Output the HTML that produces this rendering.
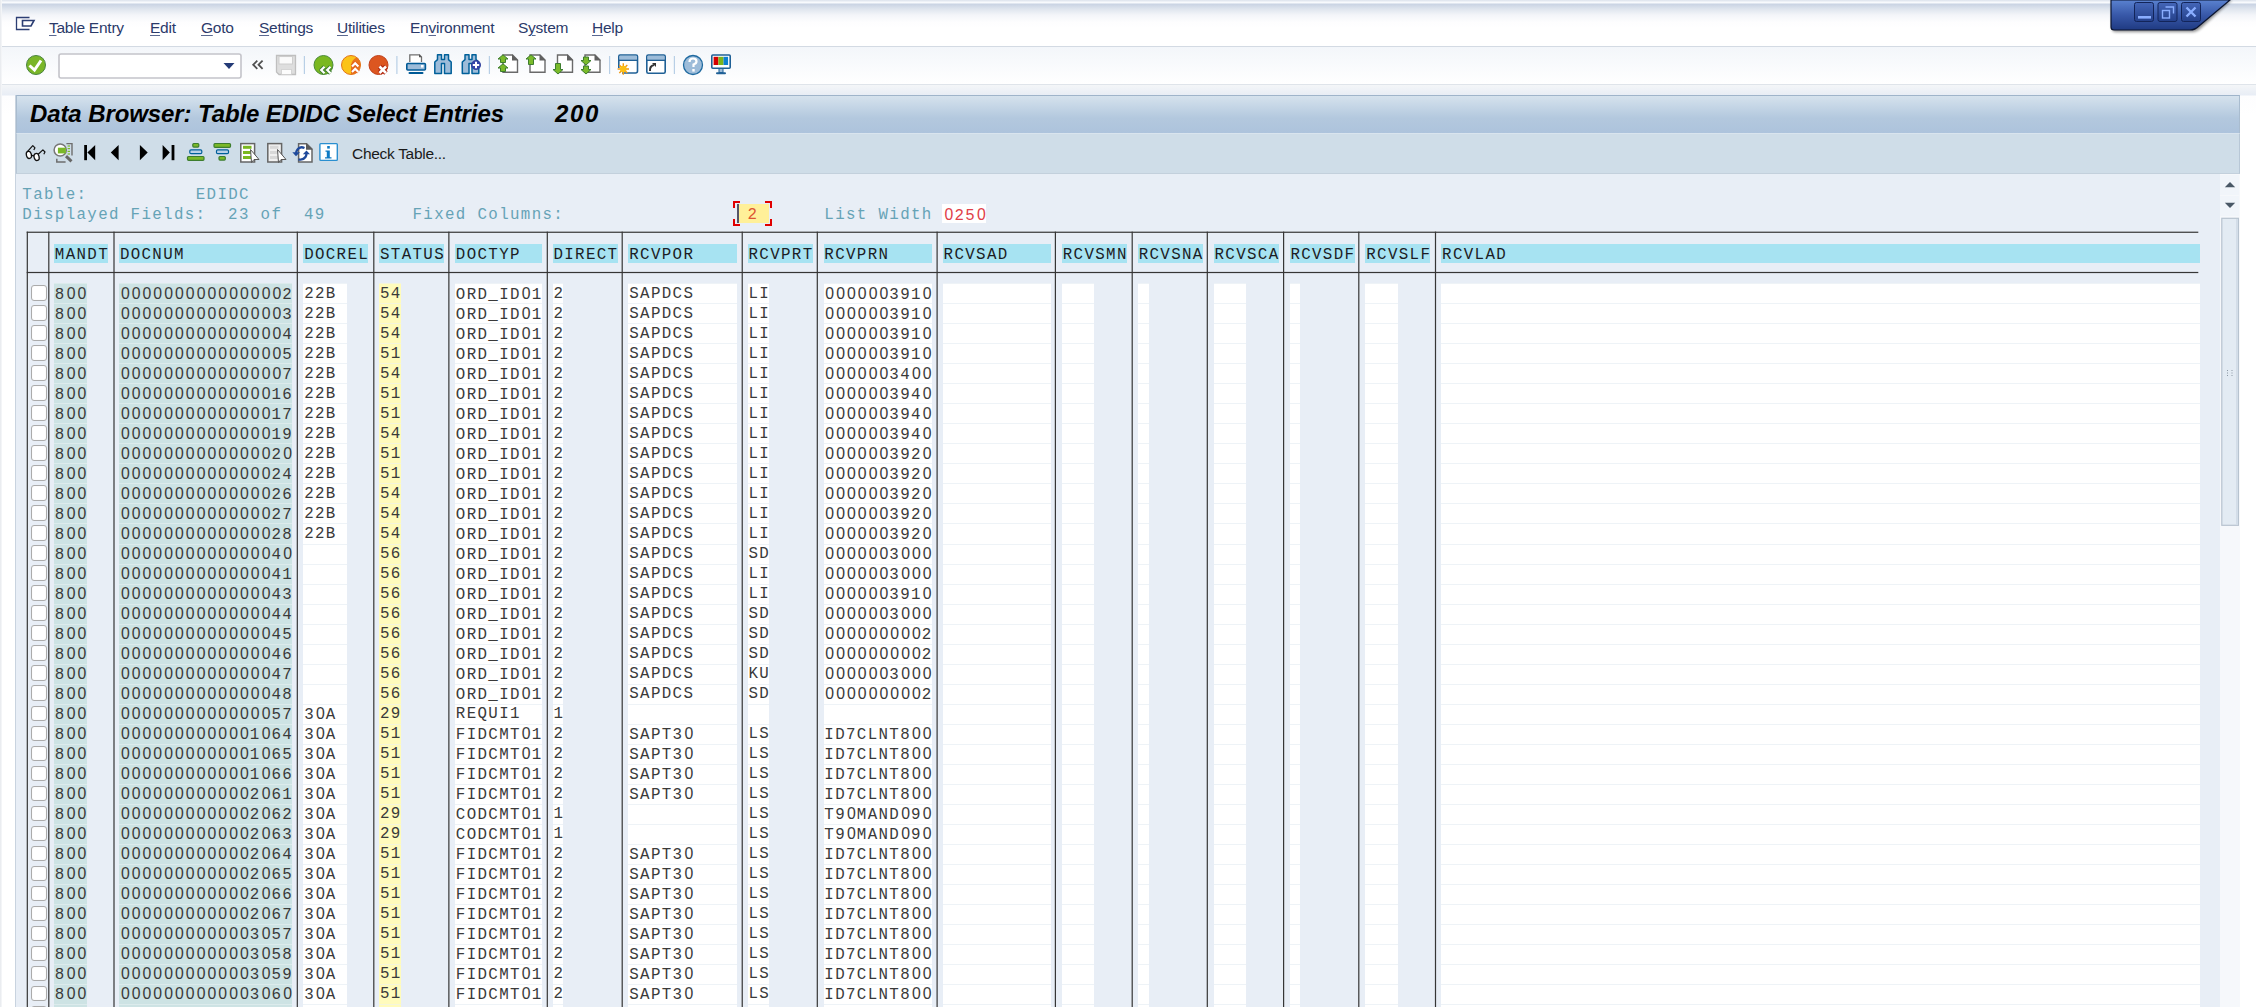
<!DOCTYPE html>
<html><head><meta charset="utf-8">
<style>
html,body{margin:0;padding:0;width:2256px;height:1007px;overflow:hidden;background:#fff;position:relative;font-family:"Liberation Sans",sans-serif}
div{position:absolute;box-sizing:border-box}
.topgrad{left:0;top:0;width:2256px;height:46px;background:linear-gradient(#dfe5ee 0px,#e4e9f1 1px,#f8fafd 2px,#f8fafd 3px,#c9d3e3 4px,#dfe5ee 9px,#f3f5f9 15px,#fdfdfe 22px,#ffffff 28px)}
.menusep{left:0;top:46px;width:2256px;height:1px;background:#d3dae3}
.tbarea{left:0;top:47px;width:2256px;height:37px;background:linear-gradient(#f3f6fa,#ffffff)}
.tbsep{left:0;top:84px;width:2256px;height:1px;background:#dfe4ea}
.below{left:0;top:85px;width:2256px;height:922px;background:linear-gradient(#f4f6f8,#e8edf5 10px,#fdfdfe 11px,#ffffff 30px)}
.panel{left:15px;top:95px;width:2225px;height:912px;background:#e8eef6;border-left:1px solid #c8d3df;border-right:1px solid #c8d3df}
.titleband{left:16px;top:95px;width:2224px;height:38px;background:linear-gradient(#d5e2ed,#b3c8de 60%,#adc3dc);border-top:1px solid #9fb4ca;border-left:1px solid #a9bccf;border-right:1px solid #a9bccf}
.apptb{left:16px;top:133px;width:2224px;height:41px;background:#cfdde8;border-top:1px solid #d9e4ee;border-bottom:1px solid #c3d0dc;border-left:1px solid #b8c7d6;border-right:1px solid #b8c7d6}
.menu{top:18px;font-size:15.5px;letter-spacing:-0.25px;color:#2b3a6a;white-space:nowrap;line-height:20px}
.menu u{text-decoration:underline;text-decoration-thickness:1px;text-underline-offset:1.5px;text-decoration-color:#5a6890}
.title{left:30px;top:100px;font-size:24px;font-weight:bold;font-style:italic;color:#000;white-space:nowrap;line-height:28px}
.chk{left:352px;top:144px;font-size:15.5px;letter-spacing:-0.3px;color:#1a1a1a;white-space:nowrap;line-height:20px}
.t{font-family:"Liberation Mono",monospace;font-size:15.8px;letter-spacing:1.35px;line-height:20px;height:20px;white-space:pre;color:#3a3a3a}
.h{color:#1c1c24}
.t b,.lbl b{font-weight:normal;display:inline-block;width:10.838px;letter-spacing:0;font-family:"Liberation Sans",sans-serif;font-size:15.8px;text-indent:1px}
.lbl{font-family:"Liberation Mono",monospace;font-size:15.8px;letter-spacing:1.35px;line-height:20px;white-space:pre;color:#66a3b6}
.red{color:#e04048}
.red2{color:#dd5533}
.bgw{background:#fff}
.fc{background:#fff099}
.cur{width:1.5px;height:19px;background:#556}
.brk{width:7px;height:7px}
.hl{height:1px;background:#2a2a2a;box-shadow:0 1px 0 rgba(0,0,0,0.15)}
.vl{width:1px;background:#303030;box-shadow:1px 0 0 rgba(0,0,0,0.28)}
.hbg{height:19px;background:#a7e3f2}
.bk{height:21px;background:#cde3e4;border-top:1px solid #dcebec}
.by{height:21px;background:#fffbbc;border-top:1px solid #f4f5dc}
.bn{height:21px;background:#fff;border-top:1px solid #eef3f7}
.cb{width:15.6px;height:15.8px;border:1.3px solid #ababab;border-radius:3px;background:#fff;box-shadow:inset 0 0 1px rgba(0,0,0,0.12)}
</style></head><body>
<div class="topgrad"></div>
<div class="menusep"></div>
<div class="tbarea"></div>
<div class="tbsep"></div>
<div class="below"></div>
<div class="panel"></div>
<div style="left:0;top:0;width:2px;height:1007px;background:linear-gradient(to right,#e6e9ed,#f7f8fa)"></div>
<div class="titleband"></div>
<div class="apptb"></div>

<!-- menu -->
<div class="menu" style="left:49px"><u>T</u>able Entry</div>
<div class="menu" style="left:150px"><u>E</u>dit</div>
<div class="menu" style="left:201px"><u>G</u>oto</div>
<div class="menu" style="left:259px"><u>S</u>ettings</div>
<div class="menu" style="left:337px"><u>U</u>tilities</div>
<div class="menu" style="left:410px">En<u>v</u>ironment</div>
<div class="menu" style="left:518px">S<u>y</u>stem</div>
<div class="menu" style="left:592px"><u>H</u>elp</div>

<div class="title" style="letter-spacing:-0.1px">Data Browser: Table EDIDC Select Entries</div>
<div class="title" style="left:555px;letter-spacing:1.6px">200</div>
<div class="chk">Check Table...</div>

<svg width="2256" height="180" viewBox="0 0 2256 180" style="position:absolute;left:0;top:0">
<defs>
<filter id="tabshadow" x="-10%" y="-50%" width="120%" height="200%"><feGaussianBlur stdDeviation="1.6"/></filter>
<linearGradient id="tabg" x1="0" y1="0" x2="0" y2="1"><stop offset="0" stop-color="#5a82d0"/><stop offset="0.5" stop-color="#3858a8"/><stop offset="1" stop-color="#1f3a82"/></linearGradient>
<linearGradient id="btng" x1="0" y1="0" x2="0" y2="1"><stop offset="0" stop-color="#4466b8"/><stop offset="1" stop-color="#24408a"/></linearGradient>
</defs>
<!-- menu icon -->
<path d="M29.5 17.5 H16.5 V29.5 H29.5" fill="none" stroke="#2c3e73" stroke-width="1.3"/>
<path d="M22.5 20.5 H34 L31 26 H22.5 Z" fill="none" stroke="#2c3e73" stroke-width="1.6"/>
<!-- window tab -->
<path d="M2112 0 V28 Q2112 32 2116 32 H2192 Q2197 32 2201 28 L2232 0 Z" fill="#000" opacity="0.45" filter="url(#tabshadow)"/>
<path d="M2111 0 V27 Q2111 30 2114 30 H2190 Q2195 30 2199 26 L2230 0 Z" fill="url(#tabg)" stroke="#0a1430" stroke-width="1.2"/>
<g stroke="#13255a" stroke-width="1" fill="url(#btng)">
<rect x="2134.5" y="2.5" width="19" height="19" rx="2"/>
<rect x="2158" y="2.5" width="19" height="19" rx="2"/>
<rect x="2181.5" y="2.5" width="19" height="19" rx="2"/>
</g>
<rect x="2138" y="16" width="13" height="2.6" fill="#8aaeff"/>
<path d="M2165.5 7 H2173.5 V13.5" fill="none" stroke="#8aaeff" stroke-width="1.4"/>
<rect x="2162.5" y="10.5" width="7" height="7.5" fill="none" stroke="#8aaeff" stroke-width="1.4"/>
<path d="M2186.5 7.5 L2195.5 16.5 M2195.5 7.5 L2186.5 16.5" stroke="#8aaeff" stroke-width="2.4"/>
<!-- toolbar: green check -->
<circle cx="36" cy="65" r="9.5" fill="#7ab628" stroke="#4a8440" stroke-width="1"/>
<path d="M29.5 65.5 L34.5 70 L41 60.5" fill="none" stroke="#fff" stroke-width="3" stroke-linejoin="miter"/>
<!-- command field -->
<rect x="59" y="54" width="182" height="24" rx="2" fill="#fff" stroke="#c4c4ca" stroke-width="1.6"/>
<path d="M223.5 63 H234.5 L229 69 Z" fill="#243b77"/>
<!-- << -->
<path d="M257.3 60.6 L253.2 64.7 L257.3 68.8 M262.6 60.6 L258.5 64.7 L262.6 68.8" fill="none" stroke="#505050" stroke-width="1.8"/>
<!-- save -->
<path d="M276.5 55.5 H295.5 V74.5 H279 L276.5 72 Z" fill="#dedede" stroke="#bfbfbf" stroke-width="1.3"/>
<rect x="279" y="56.6" width="13.5" height="7.4" fill="#fafafa" stroke="#cacaca" stroke-width="0.9"/>
<rect x="281.6" y="69.4" width="9.8" height="5" fill="#fcfcfc" stroke="#cfcfcf" stroke-width="0.8"/>
<!-- separators -->
<g fill="#b8cfe6"><rect x="303.8" y="56" width="1.2" height="18"/><rect x="396.3" y="56" width="1.2" height="18"/><rect x="488.8" y="56" width="1.2" height="18"/><rect x="609" y="56" width="1.2" height="18"/><rect x="673.8" y="56" width="1.2" height="18"/></g>
<!-- green back -->
<circle cx="323.5" cy="65" r="9.5" fill="#7ab820" stroke="#4a8a38" stroke-width="1"/>
<path d="M324.5 66.8 L321.2 70 L324.5 73.2 M330.5 66.8 L327.2 70 L330.5 73.2" fill="none" stroke="#3d7d30" stroke-width="4" stroke-linejoin="round"/>
<path d="M324.5 66.8 L321.2 70 L324.5 73.2 M330.5 66.8 L327.2 70 L330.5 73.2" fill="none" stroke="#fff" stroke-width="2.2"/>
<!-- orange exit -->
<circle cx="351" cy="65" r="9.5" fill="#fbc318" stroke="#e2731a" stroke-width="1"/>
<path d="M360.5 65 A9.5 9.5 0 0 1 351 74.5 V65 Q352 59 357 57.5 A9.5 9.5 0 0 1 360.5 65Z" fill="#e8741c"/>
<path d="M352 66.5 L355.2 63.3 L358.4 66.5 M352 72 L355.2 68.8 L358.4 72" fill="none" stroke="#e2601a" stroke-width="4" stroke-linejoin="round"/>
<path d="M352 66.5 L355.2 63.3 L358.4 66.5 M352 72 L355.2 68.8 L358.4 72" fill="none" stroke="#fff" stroke-width="2.2"/>
<!-- red cancel -->
<circle cx="378.5" cy="65" r="9.5" fill="#dc5620" stroke="#c0401a" stroke-width="1"/>
<path d="M379.5 66.5 L386 73 M386 66.5 L379.5 73" stroke="#b02810" stroke-width="4.8"/>
<path d="M379.5 66.5 L386 73 M386 66.5 L379.5 73" stroke="#fff" stroke-width="2.6"/>
<!-- printer -->
<path d="M409.8 62 V54.8 H419.5 L421.5 57 V62" fill="#fff" stroke="#707070" stroke-width="1.3"/><path d="M419 54.3 L422 57.3 H419Z" fill="#555"/>
<rect x="406.8" y="63.5" width="18.6" height="6.5" rx="1" fill="#9dbcd9" stroke="#005a96" stroke-width="1.6"/>
<rect x="421" y="65" width="2.5" height="2.5" fill="#fff"/>
<rect x="408.5" y="72" width="15" height="2" rx="1" fill="#005a96"/>
<!-- binoculars -->
<g fill="#9dbcd9" stroke="#00609a" stroke-width="1.5" stroke-linejoin="round">
<path d="M437.5 54.8 H441.5 V59.6 H444.5 V54.8 H448.5 V59.6 L451.2 62 V73.5 H444.5 V63.4 H441.5 V73.5 H434.8 V62 L437.5 59.6 Z"/>
<path d="M465 54.8 H469 V59.6 H472 V54.8 H476 V59.6 L478.8 62 V73.5 H472 V63.4 H469 V73.5 H462.3 V62 L465 59.6 Z"/>
</g>
<circle cx="476" cy="65" r="4.6" fill="#3344a8" stroke="#2a3a98" stroke-width="0.8"/>
<path d="M476 61.8 V68.2 M472.8 65 H479.2" stroke="#fff" stroke-width="2"/>
<!-- page icons -->
<g fill="#fff" stroke="#6a6a6a" stroke-width="1.4">
<path d="M503 55 H512.5 L517.5 60 V72.3 H503 Z"/>
<path d="M530 55 H540 L545 60 V72.3 H530 Z"/>
<path d="M557.5 55 H567.5 L572.5 60 V72.3 H557.5 Z"/>
<path d="M585 55 H595 L600 60 V72.3 H585 Z"/>
</g>
<g fill="#606060"><path d="M512 54.3 L518.3 60.6 H512Z"/><path d="M539.5 54.3 L545.8 60.6 H539.5Z"/><path d="M567 54.3 L573.3 60.6 H567Z"/><path d="M594.5 54.3 L600.8 60.6 H594.5Z"/></g>
<g fill="#7aba2a" stroke="#3d7d2e" stroke-width="1" stroke-linejoin="round">
<path d="M503 54.8 L508 59 H505.5 V62.5 H500.5 V59 H498 Z"/>
<path d="M503 63.8 L508 68 H505.5 V71.5 H500.5 V68 H498 Z"/>
<path d="M531 54.8 L536 59 H533.5 V64.5 H528.5 V59 H526 Z"/>
<path d="M558 74 L563 69.5 H560.5 V63.5 H555.5 V69.5 H553 Z"/>
<path d="M586 65 L591 60.5 H588.5 V57 H583.5 V60.5 H581 Z"/>
<path d="M586 74 L591 69.5 H588.5 V66 H583.5 V69.5 H581 Z"/>
</g>
<!-- window sun -->
<path d="M622 73 H635.5 Q637.5 73 637.5 71 V56.5 Q637.5 55 636 55 H620 Q618.8 55 618.8 56.5 V68" fill="#fff" stroke="#1f6096" stroke-width="1.6"/>
<rect x="619.6" y="55.8" width="17.2" height="4" fill="#9dbcd9"/>
<path d="M618.8 60.3 H637.5" stroke="#1f6096" stroke-width="1.4"/>
<g stroke="#f29a10" stroke-width="1.4"><path d="M623.3 63.3 V74.7 M617.6 69 H629 M619.3 65 L627.3 73 M627.3 65 L619.3 73"/></g>
<circle cx="623.3" cy="69" r="3.3" fill="#fcc014"/>
<!-- window arrow -->
<rect x="646.8" y="55" width="18.4" height="18.3" rx="1.5" fill="#fff" stroke="#1f6096" stroke-width="1.6"/>
<rect x="647.6" y="55.8" width="16.8" height="4" fill="#9dbcd9"/>
<path d="M646.8 60.3 H665.2" stroke="#1f6096" stroke-width="1.4"/>
<path d="M650 71 Q649.5 66 654 65" fill="none" stroke="#333" stroke-width="2"/>
<path d="M652 63 H656 V67 Z" fill="#333"/>
<!-- help -->
<circle cx="693" cy="65" r="9.5" fill="#9dbcd9" stroke="#1f6aa0" stroke-width="1.3"/>
<path d="M689.5 62 Q689.5 58.5 693 58.5 Q696.5 58.5 696.5 61.5 Q696.5 63.5 693.5 64.5 V67" fill="none" stroke="#fff" stroke-width="2.2"/>
<rect x="692.3" y="69" width="2.4" height="2.6" fill="#fff"/>
<!-- monitor -->
<rect x="711.8" y="55" width="18.4" height="13.3" rx="1" fill="#fff" stroke="#1f6096" stroke-width="1.6"/>
<rect x="713.6" y="56.8" width="4.8" height="8.2" fill="#d40000"/>
<rect x="718.4" y="56.8" width="5.1" height="8.2" fill="#7ab41c"/>
<rect x="723.5" y="56.8" width="4.6" height="8.2" fill="#0a80d0"/>
<rect x="719" y="68.5" width="4" height="4" fill="#9dbcd9" stroke="#1f6096" stroke-width="1"/>
<rect x="716" y="72.3" width="10" height="2" rx="1" fill="#1f6096"/>
<!-- app toolbar -->
<g fill="#fff" stroke="#111" stroke-width="1.3">
<ellipse cx="28.9" cy="154.9" rx="2.5" ry="3.6" transform="rotate(-15 28.9 154.9)"/>
<ellipse cx="36.6" cy="157" rx="2.5" ry="3.6" transform="rotate(-15 36.6 157)"/>
</g>
<g fill="none" stroke="#111" stroke-width="1.2" stroke-linejoin="round">
<path d="M27.6 151.3 L32.8 145.6 L35 147.8 L33.8 150"/>
<path d="M38.2 154.2 L42.9 149.9 L45 152 L43.8 154.2"/>
<path d="M31.2 155.4 L34.3 155.9"/>
</g>
<g>
<path d="M66.4 143.6 H72 V155.5" fill="none" stroke="#6e6e6e" stroke-width="1.4"/>
<path d="M56.8 158.8 V162 H65.6" fill="none" stroke="#6e6e6e" stroke-width="1.5"/>
<circle cx="60.2" cy="150" r="6.1" fill="#fff" stroke="#777" stroke-width="1.5"/>
<rect x="57.9" y="147.7" width="8" height="5.7" fill="#7ab828"/>
<path d="M66 156.2 L71.5 161.4" stroke="#666" stroke-width="3"/>
<g fill="#7ab828"><rect x="67.6" y="145.4" width="2.4" height="1.2"/><rect x="67.6" y="148" width="2.4" height="1.2"/><rect x="67.6" y="150.8" width="2.4" height="1.2"/><rect x="67.6" y="153.4" width="2.4" height="1.2"/></g>
</g>
<g fill="#000">
<rect x="84.2" y="145" width="2.8" height="15.2"/><path d="M95.2 145 V160.2 L87.4 152.6Z"/>
<path d="M118.6 145 V160.2 L110.8 152.6Z"/>
<path d="M139.9 145 V160.2 L147.7 152.6Z"/>
<path d="M162.6 145 V160.2 L169.8 152.6Z"/><rect x="171.6" y="145" width="2.8" height="15.2"/>
</g>
<!-- sort asc/desc -->
<g stroke-width="1.2">
<rect x="192.8" y="143.5" width="6" height="3.6" rx="1" fill="#7ab828" stroke="#3d7d2e"/>
<rect x="189.8" y="149.8" width="12" height="3.8" rx="1.2" fill="#b9d0e8" stroke="#00609a"/>
<rect x="187.5" y="156.5" width="16.5" height="3.8" rx="1" fill="#7ab828" stroke="#3d7d2e"/>
<rect x="214" y="143.5" width="16.5" height="3.8" rx="1" fill="#7ab828" stroke="#3d7d2e"/>
<rect x="216.5" y="149.8" width="12" height="3.8" rx="1.2" fill="#b9d0e8" stroke="#00609a"/>
<rect x="219" y="156.5" width="6.3" height="3.6" rx="1" fill="#7ab828" stroke="#3d7d2e"/>
</g>
<!-- green doc -->
<rect x="240.8" y="143.6" width="13.8" height="18.4" fill="#fff" stroke="#666" stroke-width="1.5"/>
<g fill="#7ab820"><rect x="243" y="145.8" width="8.5" height="3"/><rect x="243" y="151" width="8" height="3"/><rect x="243" y="156" width="8" height="3"/></g>
<path d="M250.5 149.5 L259 159.5 H254 L251.5 162.5 Z" fill="#fff" stroke="#555" stroke-width="1"/>
<!-- gray doc -->
<rect x="267.8" y="143.6" width="13.8" height="18.4" fill="#f0f0f0" stroke="#666" stroke-width="1.5"/>
<g fill="#d8d8d8"><rect x="270" y="145.8" width="8.5" height="3"/><rect x="270" y="151" width="8" height="3"/><rect x="270" y="156" width="8" height="3"/></g>
<path d="M277.5 149.5 L286 159.5 H281 L278.5 162.5 Z" fill="#fff" stroke="#555" stroke-width="1"/>
<!-- refresh doc -->
<path d="M298.6 143.7 H306.6 L312 149 V162 H298.6 Z" fill="#fff" stroke="#666" stroke-width="1.5"/>
<path d="M306 143 L312.7 149.7 H306Z" fill="#5a5a5a"/>
<path d="M304.5 148 Q300 146 297.5 149.5 Q296.3 151 296 153" fill="none" stroke="#1f4a9c" stroke-width="2.3"/>
<path d="M292.3 152.2 H300 L296 156.2Z" fill="#1f4a9c"/>
<path d="M298.5 159.3 Q303 160.5 305.5 157 Q306.4 155.5 306.5 153.5" fill="none" stroke="#1f4a9c" stroke-width="2.3"/>
<path d="M302.8 154.2 H310 L306.5 150.6Z" fill="#1f4a9c"/>
<!-- info -->
<rect x="319.9" y="143.6" width="17.4" height="16.8" rx="0.8" fill="#fff" stroke="#2a8fd0" stroke-width="1.4"/>
<rect x="327.2" y="146" width="2.6" height="2.6" fill="#0e7ac4"/>
<path d="M325.5 150.5 H329.8 V157.2 H331.5 V158.5 H325 V157.2 H326.8 V151.8 H325.5Z" fill="#0e7ac4"/>
</svg>

<div class="lbl" style="left:22.34px;top:184.6px">Table:</div>
<div class="lbl" style="left:195.75px;top:184.6px">EDIDC</div>
<div class="lbl" style="left:22.34px;top:204.6px">Displayed Fields:&nbsp; 23 of&nbsp; 49</div>
<div class="lbl" style="left:412.51px;top:204.6px">Fixed Columns:</div>
<div class="lbl" style="left:824.35px;top:204.6px">List Width</div>
<div class="bgw" style="left:942px;top:204px;width:44px;height:19px"></div>
<div class="t red" style="left:943.57px;top:204.6px"><b>0</b>25<b>0</b></div>
<div class="fc" style="left:737px;top:204px;width:32px;height:19px"></div>
<div class="cur" style="left:737px;top:204px"></div>
<div class="t red2" style="left:747.50px;top:204.6px">2</div>
<div class="brk" style="left:733px;top:201px;border-left:2px solid #e00000;border-top:2px solid #e00000;"></div>
<div class="brk" style="left:765px;top:201px;border-right:2px solid #e00000;border-top:2px solid #e00000;"></div>
<div class="brk" style="left:733px;top:219px;border-left:2px solid #e00000;border-bottom:2px solid #e00000;"></div>
<div class="brk" style="left:765px;top:219px;border-right:2px solid #e00000;border-bottom:2px solid #e00000;"></div>
<div class="hbg" style="left:54.05px;top:244.2px;width:54.19px"></div>
<div class="t h" style="left:54.85px;top:244.6px">MANDT</div>
<div class="hbg" style="left:119.08px;top:244.2px;width:173.41px"></div>
<div class="t h" style="left:119.88px;top:244.6px">DOCNUM</div>
<div class="hbg" style="left:303.33px;top:244.2px;width:65.03px"></div>
<div class="t h" style="left:304.13px;top:244.6px">DOCREL</div>
<div class="hbg" style="left:379.19px;top:244.2px;width:65.03px"></div>
<div class="t h" style="left:379.99px;top:244.6px">STATUS</div>
<div class="hbg" style="left:455.06px;top:244.2px;width:86.70px"></div>
<div class="t h" style="left:455.86px;top:244.6px">DOCTYP</div>
<div class="hbg" style="left:552.60px;top:244.2px;width:65.03px"></div>
<div class="t h" style="left:553.40px;top:244.6px">DIRECT</div>
<div class="hbg" style="left:628.47px;top:244.2px;width:108.38px"></div>
<div class="t h" style="left:629.27px;top:244.6px">RCVPOR</div>
<div class="hbg" style="left:747.69px;top:244.2px;width:65.03px"></div>
<div class="t h" style="left:748.49px;top:244.6px">RCVPRT</div>
<div class="hbg" style="left:823.55px;top:244.2px;width:108.38px"></div>
<div class="t h" style="left:824.35px;top:244.6px">RCVPRN</div>
<div class="hbg" style="left:942.77px;top:244.2px;width:108.38px"></div>
<div class="t h" style="left:943.57px;top:244.6px">RCVSAD</div>
<div class="hbg" style="left:1061.99px;top:244.2px;width:65.03px"></div>
<div class="t h" style="left:1062.79px;top:244.6px">RCVSMN</div>
<div class="hbg" style="left:1137.85px;top:244.2px;width:65.03px"></div>
<div class="t h" style="left:1138.65px;top:244.6px">RCVSNA</div>
<div class="hbg" style="left:1213.72px;top:244.2px;width:65.03px"></div>
<div class="t h" style="left:1214.52px;top:244.6px">RCVSCA</div>
<div class="hbg" style="left:1289.59px;top:244.2px;width:65.03px"></div>
<div class="t h" style="left:1290.39px;top:244.6px">RCVSDF</div>
<div class="hbg" style="left:1365.45px;top:244.2px;width:65.03px"></div>
<div class="t h" style="left:1366.25px;top:244.6px">RCVSLF</div>
<div class="hbg" style="left:1441.32px;top:244.2px;width:758.66px"></div>
<div class="t h" style="left:1442.12px;top:244.6px">RCVLAD</div>
<div class="cb" style="left:31px;top:285.2px"></div>
<div class="bk" style="left:54.05px;top:283.3px;width:32.51px"></div>
<div class="t" style="left:54.85px;top:283.6px">8<b>0</b><b>0</b></div>
<div class="bk" style="left:119.08px;top:283.3px;width:173.41px"></div>
<div class="t" style="left:119.88px;top:283.6px"><b>0</b><b>0</b><b>0</b><b>0</b><b>0</b><b>0</b><b>0</b><b>0</b><b>0</b><b>0</b><b>0</b><b>0</b><b>0</b><b>0</b><b>0</b>2</div>
<div class="bn" style="left:303.33px;top:283.3px;width:43.35px"></div>
<div class="t" style="left:304.13px;top:283.6px">22B</div>
<div class="by" style="left:379.19px;top:283.3px;width:21.68px"></div>
<div class="t" style="left:379.99px;top:283.6px">54</div>
<div class="bn" style="left:455.06px;top:283.3px;width:86.70px"></div>
<div class="t" style="left:455.86px;top:283.6px">ORD_ID<b>0</b>1</div>
<div class="bn" style="left:552.60px;top:283.3px;width:10.84px"></div>
<div class="t" style="left:553.40px;top:283.6px">2</div>
<div class="bn" style="left:628.47px;top:283.3px;width:108.38px"></div>
<div class="t" style="left:629.27px;top:283.6px">SAPDCS</div>
<div class="bn" style="left:747.69px;top:283.3px;width:21.68px"></div>
<div class="t" style="left:748.49px;top:283.6px">LI</div>
<div class="bn" style="left:823.55px;top:283.3px;width:108.38px"></div>
<div class="t" style="left:824.35px;top:283.6px"><b>0</b><b>0</b><b>0</b><b>0</b><b>0</b><b>0</b>391<b>0</b></div>
<div class="bn" style="left:942.77px;top:283.3px;width:108.38px"></div>
<div class="bn" style="left:1061.99px;top:283.3px;width:32.51px"></div>
<div class="bn" style="left:1137.85px;top:283.3px;width:10.84px"></div>
<div class="bn" style="left:1213.72px;top:283.3px;width:32.51px"></div>
<div class="bn" style="left:1289.59px;top:283.3px;width:10.84px"></div>
<div class="bn" style="left:1365.45px;top:283.3px;width:32.51px"></div>
<div class="bn" style="left:1441.32px;top:283.3px;width:758.66px"></div>
<div class="cb" style="left:31px;top:305.2px"></div>
<div class="bk" style="left:54.05px;top:303.3px;width:32.51px"></div>
<div class="t" style="left:54.85px;top:303.6px">8<b>0</b><b>0</b></div>
<div class="bk" style="left:119.08px;top:303.3px;width:173.41px"></div>
<div class="t" style="left:119.88px;top:303.6px"><b>0</b><b>0</b><b>0</b><b>0</b><b>0</b><b>0</b><b>0</b><b>0</b><b>0</b><b>0</b><b>0</b><b>0</b><b>0</b><b>0</b><b>0</b>3</div>
<div class="bn" style="left:303.33px;top:303.3px;width:43.35px"></div>
<div class="t" style="left:304.13px;top:303.6px">22B</div>
<div class="by" style="left:379.19px;top:303.3px;width:21.68px"></div>
<div class="t" style="left:379.99px;top:303.6px">54</div>
<div class="bn" style="left:455.06px;top:303.3px;width:86.70px"></div>
<div class="t" style="left:455.86px;top:303.6px">ORD_ID<b>0</b>1</div>
<div class="bn" style="left:552.60px;top:303.3px;width:10.84px"></div>
<div class="t" style="left:553.40px;top:303.6px">2</div>
<div class="bn" style="left:628.47px;top:303.3px;width:108.38px"></div>
<div class="t" style="left:629.27px;top:303.6px">SAPDCS</div>
<div class="bn" style="left:747.69px;top:303.3px;width:21.68px"></div>
<div class="t" style="left:748.49px;top:303.6px">LI</div>
<div class="bn" style="left:823.55px;top:303.3px;width:108.38px"></div>
<div class="t" style="left:824.35px;top:303.6px"><b>0</b><b>0</b><b>0</b><b>0</b><b>0</b><b>0</b>391<b>0</b></div>
<div class="bn" style="left:942.77px;top:303.3px;width:108.38px"></div>
<div class="bn" style="left:1061.99px;top:303.3px;width:32.51px"></div>
<div class="bn" style="left:1137.85px;top:303.3px;width:10.84px"></div>
<div class="bn" style="left:1213.72px;top:303.3px;width:32.51px"></div>
<div class="bn" style="left:1289.59px;top:303.3px;width:10.84px"></div>
<div class="bn" style="left:1365.45px;top:303.3px;width:32.51px"></div>
<div class="bn" style="left:1441.32px;top:303.3px;width:758.66px"></div>
<div class="cb" style="left:31px;top:325.2px"></div>
<div class="bk" style="left:54.05px;top:323.3px;width:32.51px"></div>
<div class="t" style="left:54.85px;top:323.6px">8<b>0</b><b>0</b></div>
<div class="bk" style="left:119.08px;top:323.3px;width:173.41px"></div>
<div class="t" style="left:119.88px;top:323.6px"><b>0</b><b>0</b><b>0</b><b>0</b><b>0</b><b>0</b><b>0</b><b>0</b><b>0</b><b>0</b><b>0</b><b>0</b><b>0</b><b>0</b><b>0</b>4</div>
<div class="bn" style="left:303.33px;top:323.3px;width:43.35px"></div>
<div class="t" style="left:304.13px;top:323.6px">22B</div>
<div class="by" style="left:379.19px;top:323.3px;width:21.68px"></div>
<div class="t" style="left:379.99px;top:323.6px">54</div>
<div class="bn" style="left:455.06px;top:323.3px;width:86.70px"></div>
<div class="t" style="left:455.86px;top:323.6px">ORD_ID<b>0</b>1</div>
<div class="bn" style="left:552.60px;top:323.3px;width:10.84px"></div>
<div class="t" style="left:553.40px;top:323.6px">2</div>
<div class="bn" style="left:628.47px;top:323.3px;width:108.38px"></div>
<div class="t" style="left:629.27px;top:323.6px">SAPDCS</div>
<div class="bn" style="left:747.69px;top:323.3px;width:21.68px"></div>
<div class="t" style="left:748.49px;top:323.6px">LI</div>
<div class="bn" style="left:823.55px;top:323.3px;width:108.38px"></div>
<div class="t" style="left:824.35px;top:323.6px"><b>0</b><b>0</b><b>0</b><b>0</b><b>0</b><b>0</b>391<b>0</b></div>
<div class="bn" style="left:942.77px;top:323.3px;width:108.38px"></div>
<div class="bn" style="left:1061.99px;top:323.3px;width:32.51px"></div>
<div class="bn" style="left:1137.85px;top:323.3px;width:10.84px"></div>
<div class="bn" style="left:1213.72px;top:323.3px;width:32.51px"></div>
<div class="bn" style="left:1289.59px;top:323.3px;width:10.84px"></div>
<div class="bn" style="left:1365.45px;top:323.3px;width:32.51px"></div>
<div class="bn" style="left:1441.32px;top:323.3px;width:758.66px"></div>
<div class="cb" style="left:31px;top:345.2px"></div>
<div class="bk" style="left:54.05px;top:343.3px;width:32.51px"></div>
<div class="t" style="left:54.85px;top:343.6px">8<b>0</b><b>0</b></div>
<div class="bk" style="left:119.08px;top:343.3px;width:173.41px"></div>
<div class="t" style="left:119.88px;top:343.6px"><b>0</b><b>0</b><b>0</b><b>0</b><b>0</b><b>0</b><b>0</b><b>0</b><b>0</b><b>0</b><b>0</b><b>0</b><b>0</b><b>0</b><b>0</b>5</div>
<div class="bn" style="left:303.33px;top:343.3px;width:43.35px"></div>
<div class="t" style="left:304.13px;top:343.6px">22B</div>
<div class="by" style="left:379.19px;top:343.3px;width:21.68px"></div>
<div class="t" style="left:379.99px;top:343.6px">51</div>
<div class="bn" style="left:455.06px;top:343.3px;width:86.70px"></div>
<div class="t" style="left:455.86px;top:343.6px">ORD_ID<b>0</b>1</div>
<div class="bn" style="left:552.60px;top:343.3px;width:10.84px"></div>
<div class="t" style="left:553.40px;top:343.6px">2</div>
<div class="bn" style="left:628.47px;top:343.3px;width:108.38px"></div>
<div class="t" style="left:629.27px;top:343.6px">SAPDCS</div>
<div class="bn" style="left:747.69px;top:343.3px;width:21.68px"></div>
<div class="t" style="left:748.49px;top:343.6px">LI</div>
<div class="bn" style="left:823.55px;top:343.3px;width:108.38px"></div>
<div class="t" style="left:824.35px;top:343.6px"><b>0</b><b>0</b><b>0</b><b>0</b><b>0</b><b>0</b>391<b>0</b></div>
<div class="bn" style="left:942.77px;top:343.3px;width:108.38px"></div>
<div class="bn" style="left:1061.99px;top:343.3px;width:32.51px"></div>
<div class="bn" style="left:1137.85px;top:343.3px;width:10.84px"></div>
<div class="bn" style="left:1213.72px;top:343.3px;width:32.51px"></div>
<div class="bn" style="left:1289.59px;top:343.3px;width:10.84px"></div>
<div class="bn" style="left:1365.45px;top:343.3px;width:32.51px"></div>
<div class="bn" style="left:1441.32px;top:343.3px;width:758.66px"></div>
<div class="cb" style="left:31px;top:365.2px"></div>
<div class="bk" style="left:54.05px;top:363.3px;width:32.51px"></div>
<div class="t" style="left:54.85px;top:363.6px">8<b>0</b><b>0</b></div>
<div class="bk" style="left:119.08px;top:363.3px;width:173.41px"></div>
<div class="t" style="left:119.88px;top:363.6px"><b>0</b><b>0</b><b>0</b><b>0</b><b>0</b><b>0</b><b>0</b><b>0</b><b>0</b><b>0</b><b>0</b><b>0</b><b>0</b><b>0</b><b>0</b>7</div>
<div class="bn" style="left:303.33px;top:363.3px;width:43.35px"></div>
<div class="t" style="left:304.13px;top:363.6px">22B</div>
<div class="by" style="left:379.19px;top:363.3px;width:21.68px"></div>
<div class="t" style="left:379.99px;top:363.6px">54</div>
<div class="bn" style="left:455.06px;top:363.3px;width:86.70px"></div>
<div class="t" style="left:455.86px;top:363.6px">ORD_ID<b>0</b>1</div>
<div class="bn" style="left:552.60px;top:363.3px;width:10.84px"></div>
<div class="t" style="left:553.40px;top:363.6px">2</div>
<div class="bn" style="left:628.47px;top:363.3px;width:108.38px"></div>
<div class="t" style="left:629.27px;top:363.6px">SAPDCS</div>
<div class="bn" style="left:747.69px;top:363.3px;width:21.68px"></div>
<div class="t" style="left:748.49px;top:363.6px">LI</div>
<div class="bn" style="left:823.55px;top:363.3px;width:108.38px"></div>
<div class="t" style="left:824.35px;top:363.6px"><b>0</b><b>0</b><b>0</b><b>0</b><b>0</b><b>0</b>34<b>0</b><b>0</b></div>
<div class="bn" style="left:942.77px;top:363.3px;width:108.38px"></div>
<div class="bn" style="left:1061.99px;top:363.3px;width:32.51px"></div>
<div class="bn" style="left:1137.85px;top:363.3px;width:10.84px"></div>
<div class="bn" style="left:1213.72px;top:363.3px;width:32.51px"></div>
<div class="bn" style="left:1289.59px;top:363.3px;width:10.84px"></div>
<div class="bn" style="left:1365.45px;top:363.3px;width:32.51px"></div>
<div class="bn" style="left:1441.32px;top:363.3px;width:758.66px"></div>
<div class="cb" style="left:31px;top:385.3px"></div>
<div class="bk" style="left:54.05px;top:383.4px;width:32.51px"></div>
<div class="t" style="left:54.85px;top:383.7px">8<b>0</b><b>0</b></div>
<div class="bk" style="left:119.08px;top:383.4px;width:173.41px"></div>
<div class="t" style="left:119.88px;top:383.7px"><b>0</b><b>0</b><b>0</b><b>0</b><b>0</b><b>0</b><b>0</b><b>0</b><b>0</b><b>0</b><b>0</b><b>0</b><b>0</b><b>0</b>16</div>
<div class="bn" style="left:303.33px;top:383.4px;width:43.35px"></div>
<div class="t" style="left:304.13px;top:383.7px">22B</div>
<div class="by" style="left:379.19px;top:383.4px;width:21.68px"></div>
<div class="t" style="left:379.99px;top:383.7px">51</div>
<div class="bn" style="left:455.06px;top:383.4px;width:86.70px"></div>
<div class="t" style="left:455.86px;top:383.7px">ORD_ID<b>0</b>1</div>
<div class="bn" style="left:552.60px;top:383.4px;width:10.84px"></div>
<div class="t" style="left:553.40px;top:383.7px">2</div>
<div class="bn" style="left:628.47px;top:383.4px;width:108.38px"></div>
<div class="t" style="left:629.27px;top:383.7px">SAPDCS</div>
<div class="bn" style="left:747.69px;top:383.4px;width:21.68px"></div>
<div class="t" style="left:748.49px;top:383.7px">LI</div>
<div class="bn" style="left:823.55px;top:383.4px;width:108.38px"></div>
<div class="t" style="left:824.35px;top:383.7px"><b>0</b><b>0</b><b>0</b><b>0</b><b>0</b><b>0</b>394<b>0</b></div>
<div class="bn" style="left:942.77px;top:383.4px;width:108.38px"></div>
<div class="bn" style="left:1061.99px;top:383.4px;width:32.51px"></div>
<div class="bn" style="left:1137.85px;top:383.4px;width:10.84px"></div>
<div class="bn" style="left:1213.72px;top:383.4px;width:32.51px"></div>
<div class="bn" style="left:1289.59px;top:383.4px;width:10.84px"></div>
<div class="bn" style="left:1365.45px;top:383.4px;width:32.51px"></div>
<div class="bn" style="left:1441.32px;top:383.4px;width:758.66px"></div>
<div class="cb" style="left:31px;top:405.3px"></div>
<div class="bk" style="left:54.05px;top:403.4px;width:32.51px"></div>
<div class="t" style="left:54.85px;top:403.7px">8<b>0</b><b>0</b></div>
<div class="bk" style="left:119.08px;top:403.4px;width:173.41px"></div>
<div class="t" style="left:119.88px;top:403.7px"><b>0</b><b>0</b><b>0</b><b>0</b><b>0</b><b>0</b><b>0</b><b>0</b><b>0</b><b>0</b><b>0</b><b>0</b><b>0</b><b>0</b>17</div>
<div class="bn" style="left:303.33px;top:403.4px;width:43.35px"></div>
<div class="t" style="left:304.13px;top:403.7px">22B</div>
<div class="by" style="left:379.19px;top:403.4px;width:21.68px"></div>
<div class="t" style="left:379.99px;top:403.7px">51</div>
<div class="bn" style="left:455.06px;top:403.4px;width:86.70px"></div>
<div class="t" style="left:455.86px;top:403.7px">ORD_ID<b>0</b>1</div>
<div class="bn" style="left:552.60px;top:403.4px;width:10.84px"></div>
<div class="t" style="left:553.40px;top:403.7px">2</div>
<div class="bn" style="left:628.47px;top:403.4px;width:108.38px"></div>
<div class="t" style="left:629.27px;top:403.7px">SAPDCS</div>
<div class="bn" style="left:747.69px;top:403.4px;width:21.68px"></div>
<div class="t" style="left:748.49px;top:403.7px">LI</div>
<div class="bn" style="left:823.55px;top:403.4px;width:108.38px"></div>
<div class="t" style="left:824.35px;top:403.7px"><b>0</b><b>0</b><b>0</b><b>0</b><b>0</b><b>0</b>394<b>0</b></div>
<div class="bn" style="left:942.77px;top:403.4px;width:108.38px"></div>
<div class="bn" style="left:1061.99px;top:403.4px;width:32.51px"></div>
<div class="bn" style="left:1137.85px;top:403.4px;width:10.84px"></div>
<div class="bn" style="left:1213.72px;top:403.4px;width:32.51px"></div>
<div class="bn" style="left:1289.59px;top:403.4px;width:10.84px"></div>
<div class="bn" style="left:1365.45px;top:403.4px;width:32.51px"></div>
<div class="bn" style="left:1441.32px;top:403.4px;width:758.66px"></div>
<div class="cb" style="left:31px;top:425.3px"></div>
<div class="bk" style="left:54.05px;top:423.4px;width:32.51px"></div>
<div class="t" style="left:54.85px;top:423.7px">8<b>0</b><b>0</b></div>
<div class="bk" style="left:119.08px;top:423.4px;width:173.41px"></div>
<div class="t" style="left:119.88px;top:423.7px"><b>0</b><b>0</b><b>0</b><b>0</b><b>0</b><b>0</b><b>0</b><b>0</b><b>0</b><b>0</b><b>0</b><b>0</b><b>0</b><b>0</b>19</div>
<div class="bn" style="left:303.33px;top:423.4px;width:43.35px"></div>
<div class="t" style="left:304.13px;top:423.7px">22B</div>
<div class="by" style="left:379.19px;top:423.4px;width:21.68px"></div>
<div class="t" style="left:379.99px;top:423.7px">54</div>
<div class="bn" style="left:455.06px;top:423.4px;width:86.70px"></div>
<div class="t" style="left:455.86px;top:423.7px">ORD_ID<b>0</b>1</div>
<div class="bn" style="left:552.60px;top:423.4px;width:10.84px"></div>
<div class="t" style="left:553.40px;top:423.7px">2</div>
<div class="bn" style="left:628.47px;top:423.4px;width:108.38px"></div>
<div class="t" style="left:629.27px;top:423.7px">SAPDCS</div>
<div class="bn" style="left:747.69px;top:423.4px;width:21.68px"></div>
<div class="t" style="left:748.49px;top:423.7px">LI</div>
<div class="bn" style="left:823.55px;top:423.4px;width:108.38px"></div>
<div class="t" style="left:824.35px;top:423.7px"><b>0</b><b>0</b><b>0</b><b>0</b><b>0</b><b>0</b>394<b>0</b></div>
<div class="bn" style="left:942.77px;top:423.4px;width:108.38px"></div>
<div class="bn" style="left:1061.99px;top:423.4px;width:32.51px"></div>
<div class="bn" style="left:1137.85px;top:423.4px;width:10.84px"></div>
<div class="bn" style="left:1213.72px;top:423.4px;width:32.51px"></div>
<div class="bn" style="left:1289.59px;top:423.4px;width:10.84px"></div>
<div class="bn" style="left:1365.45px;top:423.4px;width:32.51px"></div>
<div class="bn" style="left:1441.32px;top:423.4px;width:758.66px"></div>
<div class="cb" style="left:31px;top:445.3px"></div>
<div class="bk" style="left:54.05px;top:443.4px;width:32.51px"></div>
<div class="t" style="left:54.85px;top:443.7px">8<b>0</b><b>0</b></div>
<div class="bk" style="left:119.08px;top:443.4px;width:173.41px"></div>
<div class="t" style="left:119.88px;top:443.7px"><b>0</b><b>0</b><b>0</b><b>0</b><b>0</b><b>0</b><b>0</b><b>0</b><b>0</b><b>0</b><b>0</b><b>0</b><b>0</b><b>0</b>2<b>0</b></div>
<div class="bn" style="left:303.33px;top:443.4px;width:43.35px"></div>
<div class="t" style="left:304.13px;top:443.7px">22B</div>
<div class="by" style="left:379.19px;top:443.4px;width:21.68px"></div>
<div class="t" style="left:379.99px;top:443.7px">51</div>
<div class="bn" style="left:455.06px;top:443.4px;width:86.70px"></div>
<div class="t" style="left:455.86px;top:443.7px">ORD_ID<b>0</b>1</div>
<div class="bn" style="left:552.60px;top:443.4px;width:10.84px"></div>
<div class="t" style="left:553.40px;top:443.7px">2</div>
<div class="bn" style="left:628.47px;top:443.4px;width:108.38px"></div>
<div class="t" style="left:629.27px;top:443.7px">SAPDCS</div>
<div class="bn" style="left:747.69px;top:443.4px;width:21.68px"></div>
<div class="t" style="left:748.49px;top:443.7px">LI</div>
<div class="bn" style="left:823.55px;top:443.4px;width:108.38px"></div>
<div class="t" style="left:824.35px;top:443.7px"><b>0</b><b>0</b><b>0</b><b>0</b><b>0</b><b>0</b>392<b>0</b></div>
<div class="bn" style="left:942.77px;top:443.4px;width:108.38px"></div>
<div class="bn" style="left:1061.99px;top:443.4px;width:32.51px"></div>
<div class="bn" style="left:1137.85px;top:443.4px;width:10.84px"></div>
<div class="bn" style="left:1213.72px;top:443.4px;width:32.51px"></div>
<div class="bn" style="left:1289.59px;top:443.4px;width:10.84px"></div>
<div class="bn" style="left:1365.45px;top:443.4px;width:32.51px"></div>
<div class="bn" style="left:1441.32px;top:443.4px;width:758.66px"></div>
<div class="cb" style="left:31px;top:465.3px"></div>
<div class="bk" style="left:54.05px;top:463.4px;width:32.51px"></div>
<div class="t" style="left:54.85px;top:463.7px">8<b>0</b><b>0</b></div>
<div class="bk" style="left:119.08px;top:463.4px;width:173.41px"></div>
<div class="t" style="left:119.88px;top:463.7px"><b>0</b><b>0</b><b>0</b><b>0</b><b>0</b><b>0</b><b>0</b><b>0</b><b>0</b><b>0</b><b>0</b><b>0</b><b>0</b><b>0</b>24</div>
<div class="bn" style="left:303.33px;top:463.4px;width:43.35px"></div>
<div class="t" style="left:304.13px;top:463.7px">22B</div>
<div class="by" style="left:379.19px;top:463.4px;width:21.68px"></div>
<div class="t" style="left:379.99px;top:463.7px">51</div>
<div class="bn" style="left:455.06px;top:463.4px;width:86.70px"></div>
<div class="t" style="left:455.86px;top:463.7px">ORD_ID<b>0</b>1</div>
<div class="bn" style="left:552.60px;top:463.4px;width:10.84px"></div>
<div class="t" style="left:553.40px;top:463.7px">2</div>
<div class="bn" style="left:628.47px;top:463.4px;width:108.38px"></div>
<div class="t" style="left:629.27px;top:463.7px">SAPDCS</div>
<div class="bn" style="left:747.69px;top:463.4px;width:21.68px"></div>
<div class="t" style="left:748.49px;top:463.7px">LI</div>
<div class="bn" style="left:823.55px;top:463.4px;width:108.38px"></div>
<div class="t" style="left:824.35px;top:463.7px"><b>0</b><b>0</b><b>0</b><b>0</b><b>0</b><b>0</b>392<b>0</b></div>
<div class="bn" style="left:942.77px;top:463.4px;width:108.38px"></div>
<div class="bn" style="left:1061.99px;top:463.4px;width:32.51px"></div>
<div class="bn" style="left:1137.85px;top:463.4px;width:10.84px"></div>
<div class="bn" style="left:1213.72px;top:463.4px;width:32.51px"></div>
<div class="bn" style="left:1289.59px;top:463.4px;width:10.84px"></div>
<div class="bn" style="left:1365.45px;top:463.4px;width:32.51px"></div>
<div class="bn" style="left:1441.32px;top:463.4px;width:758.66px"></div>
<div class="cb" style="left:31px;top:485.3px"></div>
<div class="bk" style="left:54.05px;top:483.4px;width:32.51px"></div>
<div class="t" style="left:54.85px;top:483.7px">8<b>0</b><b>0</b></div>
<div class="bk" style="left:119.08px;top:483.4px;width:173.41px"></div>
<div class="t" style="left:119.88px;top:483.7px"><b>0</b><b>0</b><b>0</b><b>0</b><b>0</b><b>0</b><b>0</b><b>0</b><b>0</b><b>0</b><b>0</b><b>0</b><b>0</b><b>0</b>26</div>
<div class="bn" style="left:303.33px;top:483.4px;width:43.35px"></div>
<div class="t" style="left:304.13px;top:483.7px">22B</div>
<div class="by" style="left:379.19px;top:483.4px;width:21.68px"></div>
<div class="t" style="left:379.99px;top:483.7px">54</div>
<div class="bn" style="left:455.06px;top:483.4px;width:86.70px"></div>
<div class="t" style="left:455.86px;top:483.7px">ORD_ID<b>0</b>1</div>
<div class="bn" style="left:552.60px;top:483.4px;width:10.84px"></div>
<div class="t" style="left:553.40px;top:483.7px">2</div>
<div class="bn" style="left:628.47px;top:483.4px;width:108.38px"></div>
<div class="t" style="left:629.27px;top:483.7px">SAPDCS</div>
<div class="bn" style="left:747.69px;top:483.4px;width:21.68px"></div>
<div class="t" style="left:748.49px;top:483.7px">LI</div>
<div class="bn" style="left:823.55px;top:483.4px;width:108.38px"></div>
<div class="t" style="left:824.35px;top:483.7px"><b>0</b><b>0</b><b>0</b><b>0</b><b>0</b><b>0</b>392<b>0</b></div>
<div class="bn" style="left:942.77px;top:483.4px;width:108.38px"></div>
<div class="bn" style="left:1061.99px;top:483.4px;width:32.51px"></div>
<div class="bn" style="left:1137.85px;top:483.4px;width:10.84px"></div>
<div class="bn" style="left:1213.72px;top:483.4px;width:32.51px"></div>
<div class="bn" style="left:1289.59px;top:483.4px;width:10.84px"></div>
<div class="bn" style="left:1365.45px;top:483.4px;width:32.51px"></div>
<div class="bn" style="left:1441.32px;top:483.4px;width:758.66px"></div>
<div class="cb" style="left:31px;top:505.3px"></div>
<div class="bk" style="left:54.05px;top:503.4px;width:32.51px"></div>
<div class="t" style="left:54.85px;top:503.7px">8<b>0</b><b>0</b></div>
<div class="bk" style="left:119.08px;top:503.4px;width:173.41px"></div>
<div class="t" style="left:119.88px;top:503.7px"><b>0</b><b>0</b><b>0</b><b>0</b><b>0</b><b>0</b><b>0</b><b>0</b><b>0</b><b>0</b><b>0</b><b>0</b><b>0</b><b>0</b>27</div>
<div class="bn" style="left:303.33px;top:503.4px;width:43.35px"></div>
<div class="t" style="left:304.13px;top:503.7px">22B</div>
<div class="by" style="left:379.19px;top:503.4px;width:21.68px"></div>
<div class="t" style="left:379.99px;top:503.7px">54</div>
<div class="bn" style="left:455.06px;top:503.4px;width:86.70px"></div>
<div class="t" style="left:455.86px;top:503.7px">ORD_ID<b>0</b>1</div>
<div class="bn" style="left:552.60px;top:503.4px;width:10.84px"></div>
<div class="t" style="left:553.40px;top:503.7px">2</div>
<div class="bn" style="left:628.47px;top:503.4px;width:108.38px"></div>
<div class="t" style="left:629.27px;top:503.7px">SAPDCS</div>
<div class="bn" style="left:747.69px;top:503.4px;width:21.68px"></div>
<div class="t" style="left:748.49px;top:503.7px">LI</div>
<div class="bn" style="left:823.55px;top:503.4px;width:108.38px"></div>
<div class="t" style="left:824.35px;top:503.7px"><b>0</b><b>0</b><b>0</b><b>0</b><b>0</b><b>0</b>392<b>0</b></div>
<div class="bn" style="left:942.77px;top:503.4px;width:108.38px"></div>
<div class="bn" style="left:1061.99px;top:503.4px;width:32.51px"></div>
<div class="bn" style="left:1137.85px;top:503.4px;width:10.84px"></div>
<div class="bn" style="left:1213.72px;top:503.4px;width:32.51px"></div>
<div class="bn" style="left:1289.59px;top:503.4px;width:10.84px"></div>
<div class="bn" style="left:1365.45px;top:503.4px;width:32.51px"></div>
<div class="bn" style="left:1441.32px;top:503.4px;width:758.66px"></div>
<div class="cb" style="left:31px;top:525.3px"></div>
<div class="bk" style="left:54.05px;top:523.4px;width:32.51px"></div>
<div class="t" style="left:54.85px;top:523.7px">8<b>0</b><b>0</b></div>
<div class="bk" style="left:119.08px;top:523.4px;width:173.41px"></div>
<div class="t" style="left:119.88px;top:523.7px"><b>0</b><b>0</b><b>0</b><b>0</b><b>0</b><b>0</b><b>0</b><b>0</b><b>0</b><b>0</b><b>0</b><b>0</b><b>0</b><b>0</b>28</div>
<div class="bn" style="left:303.33px;top:523.4px;width:43.35px"></div>
<div class="t" style="left:304.13px;top:523.7px">22B</div>
<div class="by" style="left:379.19px;top:523.4px;width:21.68px"></div>
<div class="t" style="left:379.99px;top:523.7px">54</div>
<div class="bn" style="left:455.06px;top:523.4px;width:86.70px"></div>
<div class="t" style="left:455.86px;top:523.7px">ORD_ID<b>0</b>1</div>
<div class="bn" style="left:552.60px;top:523.4px;width:10.84px"></div>
<div class="t" style="left:553.40px;top:523.7px">2</div>
<div class="bn" style="left:628.47px;top:523.4px;width:108.38px"></div>
<div class="t" style="left:629.27px;top:523.7px">SAPDCS</div>
<div class="bn" style="left:747.69px;top:523.4px;width:21.68px"></div>
<div class="t" style="left:748.49px;top:523.7px">LI</div>
<div class="bn" style="left:823.55px;top:523.4px;width:108.38px"></div>
<div class="t" style="left:824.35px;top:523.7px"><b>0</b><b>0</b><b>0</b><b>0</b><b>0</b><b>0</b>392<b>0</b></div>
<div class="bn" style="left:942.77px;top:523.4px;width:108.38px"></div>
<div class="bn" style="left:1061.99px;top:523.4px;width:32.51px"></div>
<div class="bn" style="left:1137.85px;top:523.4px;width:10.84px"></div>
<div class="bn" style="left:1213.72px;top:523.4px;width:32.51px"></div>
<div class="bn" style="left:1289.59px;top:523.4px;width:10.84px"></div>
<div class="bn" style="left:1365.45px;top:523.4px;width:32.51px"></div>
<div class="bn" style="left:1441.32px;top:523.4px;width:758.66px"></div>
<div class="cb" style="left:31px;top:545.4px"></div>
<div class="bk" style="left:54.05px;top:543.5px;width:32.51px"></div>
<div class="t" style="left:54.85px;top:543.8px">8<b>0</b><b>0</b></div>
<div class="bk" style="left:119.08px;top:543.5px;width:173.41px"></div>
<div class="t" style="left:119.88px;top:543.8px"><b>0</b><b>0</b><b>0</b><b>0</b><b>0</b><b>0</b><b>0</b><b>0</b><b>0</b><b>0</b><b>0</b><b>0</b><b>0</b><b>0</b>4<b>0</b></div>
<div class="bn" style="left:303.33px;top:543.5px;width:43.35px"></div>
<div class="by" style="left:379.19px;top:543.5px;width:21.68px"></div>
<div class="t" style="left:379.99px;top:543.8px">56</div>
<div class="bn" style="left:455.06px;top:543.5px;width:86.70px"></div>
<div class="t" style="left:455.86px;top:543.8px">ORD_ID<b>0</b>1</div>
<div class="bn" style="left:552.60px;top:543.5px;width:10.84px"></div>
<div class="t" style="left:553.40px;top:543.8px">2</div>
<div class="bn" style="left:628.47px;top:543.5px;width:108.38px"></div>
<div class="t" style="left:629.27px;top:543.8px">SAPDCS</div>
<div class="bn" style="left:747.69px;top:543.5px;width:21.68px"></div>
<div class="t" style="left:748.49px;top:543.8px">SD</div>
<div class="bn" style="left:823.55px;top:543.5px;width:108.38px"></div>
<div class="t" style="left:824.35px;top:543.8px"><b>0</b><b>0</b><b>0</b><b>0</b><b>0</b><b>0</b>3<b>0</b><b>0</b><b>0</b></div>
<div class="bn" style="left:942.77px;top:543.5px;width:108.38px"></div>
<div class="bn" style="left:1061.99px;top:543.5px;width:32.51px"></div>
<div class="bn" style="left:1137.85px;top:543.5px;width:10.84px"></div>
<div class="bn" style="left:1213.72px;top:543.5px;width:32.51px"></div>
<div class="bn" style="left:1289.59px;top:543.5px;width:10.84px"></div>
<div class="bn" style="left:1365.45px;top:543.5px;width:32.51px"></div>
<div class="bn" style="left:1441.32px;top:543.5px;width:758.66px"></div>
<div class="cb" style="left:31px;top:565.4px"></div>
<div class="bk" style="left:54.05px;top:563.5px;width:32.51px"></div>
<div class="t" style="left:54.85px;top:563.8px">8<b>0</b><b>0</b></div>
<div class="bk" style="left:119.08px;top:563.5px;width:173.41px"></div>
<div class="t" style="left:119.88px;top:563.8px"><b>0</b><b>0</b><b>0</b><b>0</b><b>0</b><b>0</b><b>0</b><b>0</b><b>0</b><b>0</b><b>0</b><b>0</b><b>0</b><b>0</b>41</div>
<div class="bn" style="left:303.33px;top:563.5px;width:43.35px"></div>
<div class="by" style="left:379.19px;top:563.5px;width:21.68px"></div>
<div class="t" style="left:379.99px;top:563.8px">56</div>
<div class="bn" style="left:455.06px;top:563.5px;width:86.70px"></div>
<div class="t" style="left:455.86px;top:563.8px">ORD_ID<b>0</b>1</div>
<div class="bn" style="left:552.60px;top:563.5px;width:10.84px"></div>
<div class="t" style="left:553.40px;top:563.8px">2</div>
<div class="bn" style="left:628.47px;top:563.5px;width:108.38px"></div>
<div class="t" style="left:629.27px;top:563.8px">SAPDCS</div>
<div class="bn" style="left:747.69px;top:563.5px;width:21.68px"></div>
<div class="t" style="left:748.49px;top:563.8px">LI</div>
<div class="bn" style="left:823.55px;top:563.5px;width:108.38px"></div>
<div class="t" style="left:824.35px;top:563.8px"><b>0</b><b>0</b><b>0</b><b>0</b><b>0</b><b>0</b>3<b>0</b><b>0</b><b>0</b></div>
<div class="bn" style="left:942.77px;top:563.5px;width:108.38px"></div>
<div class="bn" style="left:1061.99px;top:563.5px;width:32.51px"></div>
<div class="bn" style="left:1137.85px;top:563.5px;width:10.84px"></div>
<div class="bn" style="left:1213.72px;top:563.5px;width:32.51px"></div>
<div class="bn" style="left:1289.59px;top:563.5px;width:10.84px"></div>
<div class="bn" style="left:1365.45px;top:563.5px;width:32.51px"></div>
<div class="bn" style="left:1441.32px;top:563.5px;width:758.66px"></div>
<div class="cb" style="left:31px;top:585.4px"></div>
<div class="bk" style="left:54.05px;top:583.5px;width:32.51px"></div>
<div class="t" style="left:54.85px;top:583.8px">8<b>0</b><b>0</b></div>
<div class="bk" style="left:119.08px;top:583.5px;width:173.41px"></div>
<div class="t" style="left:119.88px;top:583.8px"><b>0</b><b>0</b><b>0</b><b>0</b><b>0</b><b>0</b><b>0</b><b>0</b><b>0</b><b>0</b><b>0</b><b>0</b><b>0</b><b>0</b>43</div>
<div class="bn" style="left:303.33px;top:583.5px;width:43.35px"></div>
<div class="by" style="left:379.19px;top:583.5px;width:21.68px"></div>
<div class="t" style="left:379.99px;top:583.8px">56</div>
<div class="bn" style="left:455.06px;top:583.5px;width:86.70px"></div>
<div class="t" style="left:455.86px;top:583.8px">ORD_ID<b>0</b>1</div>
<div class="bn" style="left:552.60px;top:583.5px;width:10.84px"></div>
<div class="t" style="left:553.40px;top:583.8px">2</div>
<div class="bn" style="left:628.47px;top:583.5px;width:108.38px"></div>
<div class="t" style="left:629.27px;top:583.8px">SAPDCS</div>
<div class="bn" style="left:747.69px;top:583.5px;width:21.68px"></div>
<div class="t" style="left:748.49px;top:583.8px">LI</div>
<div class="bn" style="left:823.55px;top:583.5px;width:108.38px"></div>
<div class="t" style="left:824.35px;top:583.8px"><b>0</b><b>0</b><b>0</b><b>0</b><b>0</b><b>0</b>391<b>0</b></div>
<div class="bn" style="left:942.77px;top:583.5px;width:108.38px"></div>
<div class="bn" style="left:1061.99px;top:583.5px;width:32.51px"></div>
<div class="bn" style="left:1137.85px;top:583.5px;width:10.84px"></div>
<div class="bn" style="left:1213.72px;top:583.5px;width:32.51px"></div>
<div class="bn" style="left:1289.59px;top:583.5px;width:10.84px"></div>
<div class="bn" style="left:1365.45px;top:583.5px;width:32.51px"></div>
<div class="bn" style="left:1441.32px;top:583.5px;width:758.66px"></div>
<div class="cb" style="left:31px;top:605.4px"></div>
<div class="bk" style="left:54.05px;top:603.5px;width:32.51px"></div>
<div class="t" style="left:54.85px;top:603.8px">8<b>0</b><b>0</b></div>
<div class="bk" style="left:119.08px;top:603.5px;width:173.41px"></div>
<div class="t" style="left:119.88px;top:603.8px"><b>0</b><b>0</b><b>0</b><b>0</b><b>0</b><b>0</b><b>0</b><b>0</b><b>0</b><b>0</b><b>0</b><b>0</b><b>0</b><b>0</b>44</div>
<div class="bn" style="left:303.33px;top:603.5px;width:43.35px"></div>
<div class="by" style="left:379.19px;top:603.5px;width:21.68px"></div>
<div class="t" style="left:379.99px;top:603.8px">56</div>
<div class="bn" style="left:455.06px;top:603.5px;width:86.70px"></div>
<div class="t" style="left:455.86px;top:603.8px">ORD_ID<b>0</b>1</div>
<div class="bn" style="left:552.60px;top:603.5px;width:10.84px"></div>
<div class="t" style="left:553.40px;top:603.8px">2</div>
<div class="bn" style="left:628.47px;top:603.5px;width:108.38px"></div>
<div class="t" style="left:629.27px;top:603.8px">SAPDCS</div>
<div class="bn" style="left:747.69px;top:603.5px;width:21.68px"></div>
<div class="t" style="left:748.49px;top:603.8px">SD</div>
<div class="bn" style="left:823.55px;top:603.5px;width:108.38px"></div>
<div class="t" style="left:824.35px;top:603.8px"><b>0</b><b>0</b><b>0</b><b>0</b><b>0</b><b>0</b>3<b>0</b><b>0</b><b>0</b></div>
<div class="bn" style="left:942.77px;top:603.5px;width:108.38px"></div>
<div class="bn" style="left:1061.99px;top:603.5px;width:32.51px"></div>
<div class="bn" style="left:1137.85px;top:603.5px;width:10.84px"></div>
<div class="bn" style="left:1213.72px;top:603.5px;width:32.51px"></div>
<div class="bn" style="left:1289.59px;top:603.5px;width:10.84px"></div>
<div class="bn" style="left:1365.45px;top:603.5px;width:32.51px"></div>
<div class="bn" style="left:1441.32px;top:603.5px;width:758.66px"></div>
<div class="cb" style="left:31px;top:625.4px"></div>
<div class="bk" style="left:54.05px;top:623.5px;width:32.51px"></div>
<div class="t" style="left:54.85px;top:623.8px">8<b>0</b><b>0</b></div>
<div class="bk" style="left:119.08px;top:623.5px;width:173.41px"></div>
<div class="t" style="left:119.88px;top:623.8px"><b>0</b><b>0</b><b>0</b><b>0</b><b>0</b><b>0</b><b>0</b><b>0</b><b>0</b><b>0</b><b>0</b><b>0</b><b>0</b><b>0</b>45</div>
<div class="bn" style="left:303.33px;top:623.5px;width:43.35px"></div>
<div class="by" style="left:379.19px;top:623.5px;width:21.68px"></div>
<div class="t" style="left:379.99px;top:623.8px">56</div>
<div class="bn" style="left:455.06px;top:623.5px;width:86.70px"></div>
<div class="t" style="left:455.86px;top:623.8px">ORD_ID<b>0</b>1</div>
<div class="bn" style="left:552.60px;top:623.5px;width:10.84px"></div>
<div class="t" style="left:553.40px;top:623.8px">2</div>
<div class="bn" style="left:628.47px;top:623.5px;width:108.38px"></div>
<div class="t" style="left:629.27px;top:623.8px">SAPDCS</div>
<div class="bn" style="left:747.69px;top:623.5px;width:21.68px"></div>
<div class="t" style="left:748.49px;top:623.8px">SD</div>
<div class="bn" style="left:823.55px;top:623.5px;width:108.38px"></div>
<div class="t" style="left:824.35px;top:623.8px"><b>0</b><b>0</b><b>0</b><b>0</b><b>0</b><b>0</b><b>0</b><b>0</b><b>0</b>2</div>
<div class="bn" style="left:942.77px;top:623.5px;width:108.38px"></div>
<div class="bn" style="left:1061.99px;top:623.5px;width:32.51px"></div>
<div class="bn" style="left:1137.85px;top:623.5px;width:10.84px"></div>
<div class="bn" style="left:1213.72px;top:623.5px;width:32.51px"></div>
<div class="bn" style="left:1289.59px;top:623.5px;width:10.84px"></div>
<div class="bn" style="left:1365.45px;top:623.5px;width:32.51px"></div>
<div class="bn" style="left:1441.32px;top:623.5px;width:758.66px"></div>
<div class="cb" style="left:31px;top:645.4px"></div>
<div class="bk" style="left:54.05px;top:643.5px;width:32.51px"></div>
<div class="t" style="left:54.85px;top:643.8px">8<b>0</b><b>0</b></div>
<div class="bk" style="left:119.08px;top:643.5px;width:173.41px"></div>
<div class="t" style="left:119.88px;top:643.8px"><b>0</b><b>0</b><b>0</b><b>0</b><b>0</b><b>0</b><b>0</b><b>0</b><b>0</b><b>0</b><b>0</b><b>0</b><b>0</b><b>0</b>46</div>
<div class="bn" style="left:303.33px;top:643.5px;width:43.35px"></div>
<div class="by" style="left:379.19px;top:643.5px;width:21.68px"></div>
<div class="t" style="left:379.99px;top:643.8px">56</div>
<div class="bn" style="left:455.06px;top:643.5px;width:86.70px"></div>
<div class="t" style="left:455.86px;top:643.8px">ORD_ID<b>0</b>1</div>
<div class="bn" style="left:552.60px;top:643.5px;width:10.84px"></div>
<div class="t" style="left:553.40px;top:643.8px">2</div>
<div class="bn" style="left:628.47px;top:643.5px;width:108.38px"></div>
<div class="t" style="left:629.27px;top:643.8px">SAPDCS</div>
<div class="bn" style="left:747.69px;top:643.5px;width:21.68px"></div>
<div class="t" style="left:748.49px;top:643.8px">SD</div>
<div class="bn" style="left:823.55px;top:643.5px;width:108.38px"></div>
<div class="t" style="left:824.35px;top:643.8px"><b>0</b><b>0</b><b>0</b><b>0</b><b>0</b><b>0</b><b>0</b><b>0</b><b>0</b>2</div>
<div class="bn" style="left:942.77px;top:643.5px;width:108.38px"></div>
<div class="bn" style="left:1061.99px;top:643.5px;width:32.51px"></div>
<div class="bn" style="left:1137.85px;top:643.5px;width:10.84px"></div>
<div class="bn" style="left:1213.72px;top:643.5px;width:32.51px"></div>
<div class="bn" style="left:1289.59px;top:643.5px;width:10.84px"></div>
<div class="bn" style="left:1365.45px;top:643.5px;width:32.51px"></div>
<div class="bn" style="left:1441.32px;top:643.5px;width:758.66px"></div>
<div class="cb" style="left:31px;top:665.4px"></div>
<div class="bk" style="left:54.05px;top:663.5px;width:32.51px"></div>
<div class="t" style="left:54.85px;top:663.8px">8<b>0</b><b>0</b></div>
<div class="bk" style="left:119.08px;top:663.5px;width:173.41px"></div>
<div class="t" style="left:119.88px;top:663.8px"><b>0</b><b>0</b><b>0</b><b>0</b><b>0</b><b>0</b><b>0</b><b>0</b><b>0</b><b>0</b><b>0</b><b>0</b><b>0</b><b>0</b>47</div>
<div class="bn" style="left:303.33px;top:663.5px;width:43.35px"></div>
<div class="by" style="left:379.19px;top:663.5px;width:21.68px"></div>
<div class="t" style="left:379.99px;top:663.8px">56</div>
<div class="bn" style="left:455.06px;top:663.5px;width:86.70px"></div>
<div class="t" style="left:455.86px;top:663.8px">ORD_ID<b>0</b>1</div>
<div class="bn" style="left:552.60px;top:663.5px;width:10.84px"></div>
<div class="t" style="left:553.40px;top:663.8px">2</div>
<div class="bn" style="left:628.47px;top:663.5px;width:108.38px"></div>
<div class="t" style="left:629.27px;top:663.8px">SAPDCS</div>
<div class="bn" style="left:747.69px;top:663.5px;width:21.68px"></div>
<div class="t" style="left:748.49px;top:663.8px">KU</div>
<div class="bn" style="left:823.55px;top:663.5px;width:108.38px"></div>
<div class="t" style="left:824.35px;top:663.8px"><b>0</b><b>0</b><b>0</b><b>0</b><b>0</b><b>0</b>3<b>0</b><b>0</b><b>0</b></div>
<div class="bn" style="left:942.77px;top:663.5px;width:108.38px"></div>
<div class="bn" style="left:1061.99px;top:663.5px;width:32.51px"></div>
<div class="bn" style="left:1137.85px;top:663.5px;width:10.84px"></div>
<div class="bn" style="left:1213.72px;top:663.5px;width:32.51px"></div>
<div class="bn" style="left:1289.59px;top:663.5px;width:10.84px"></div>
<div class="bn" style="left:1365.45px;top:663.5px;width:32.51px"></div>
<div class="bn" style="left:1441.32px;top:663.5px;width:758.66px"></div>
<div class="cb" style="left:31px;top:685.4px"></div>
<div class="bk" style="left:54.05px;top:683.5px;width:32.51px"></div>
<div class="t" style="left:54.85px;top:683.8px">8<b>0</b><b>0</b></div>
<div class="bk" style="left:119.08px;top:683.5px;width:173.41px"></div>
<div class="t" style="left:119.88px;top:683.8px"><b>0</b><b>0</b><b>0</b><b>0</b><b>0</b><b>0</b><b>0</b><b>0</b><b>0</b><b>0</b><b>0</b><b>0</b><b>0</b><b>0</b>48</div>
<div class="bn" style="left:303.33px;top:683.5px;width:43.35px"></div>
<div class="by" style="left:379.19px;top:683.5px;width:21.68px"></div>
<div class="t" style="left:379.99px;top:683.8px">56</div>
<div class="bn" style="left:455.06px;top:683.5px;width:86.70px"></div>
<div class="t" style="left:455.86px;top:683.8px">ORD_ID<b>0</b>1</div>
<div class="bn" style="left:552.60px;top:683.5px;width:10.84px"></div>
<div class="t" style="left:553.40px;top:683.8px">2</div>
<div class="bn" style="left:628.47px;top:683.5px;width:108.38px"></div>
<div class="t" style="left:629.27px;top:683.8px">SAPDCS</div>
<div class="bn" style="left:747.69px;top:683.5px;width:21.68px"></div>
<div class="t" style="left:748.49px;top:683.8px">SD</div>
<div class="bn" style="left:823.55px;top:683.5px;width:108.38px"></div>
<div class="t" style="left:824.35px;top:683.8px"><b>0</b><b>0</b><b>0</b><b>0</b><b>0</b><b>0</b><b>0</b><b>0</b><b>0</b>2</div>
<div class="bn" style="left:942.77px;top:683.5px;width:108.38px"></div>
<div class="bn" style="left:1061.99px;top:683.5px;width:32.51px"></div>
<div class="bn" style="left:1137.85px;top:683.5px;width:10.84px"></div>
<div class="bn" style="left:1213.72px;top:683.5px;width:32.51px"></div>
<div class="bn" style="left:1289.59px;top:683.5px;width:10.84px"></div>
<div class="bn" style="left:1365.45px;top:683.5px;width:32.51px"></div>
<div class="bn" style="left:1441.32px;top:683.5px;width:758.66px"></div>
<div class="cb" style="left:31px;top:705.5px"></div>
<div class="bk" style="left:54.05px;top:703.6px;width:32.51px"></div>
<div class="t" style="left:54.85px;top:703.9px">8<b>0</b><b>0</b></div>
<div class="bk" style="left:119.08px;top:703.6px;width:173.41px"></div>
<div class="t" style="left:119.88px;top:703.9px"><b>0</b><b>0</b><b>0</b><b>0</b><b>0</b><b>0</b><b>0</b><b>0</b><b>0</b><b>0</b><b>0</b><b>0</b><b>0</b><b>0</b>57</div>
<div class="bn" style="left:303.33px;top:703.6px;width:43.35px"></div>
<div class="t" style="left:304.13px;top:703.9px">3<b>0</b>A</div>
<div class="by" style="left:379.19px;top:703.6px;width:21.68px"></div>
<div class="t" style="left:379.99px;top:703.9px">29</div>
<div class="bn" style="left:455.06px;top:703.6px;width:86.70px"></div>
<div class="t" style="left:455.86px;top:703.9px">REQUI1</div>
<div class="bn" style="left:552.60px;top:703.6px;width:10.84px"></div>
<div class="t" style="left:553.40px;top:703.9px">1</div>
<div class="bn" style="left:628.47px;top:703.6px;width:108.38px"></div>
<div class="bn" style="left:747.69px;top:703.6px;width:21.68px"></div>
<div class="bn" style="left:823.55px;top:703.6px;width:108.38px"></div>
<div class="bn" style="left:942.77px;top:703.6px;width:108.38px"></div>
<div class="bn" style="left:1061.99px;top:703.6px;width:32.51px"></div>
<div class="bn" style="left:1137.85px;top:703.6px;width:10.84px"></div>
<div class="bn" style="left:1213.72px;top:703.6px;width:32.51px"></div>
<div class="bn" style="left:1289.59px;top:703.6px;width:10.84px"></div>
<div class="bn" style="left:1365.45px;top:703.6px;width:32.51px"></div>
<div class="bn" style="left:1441.32px;top:703.6px;width:758.66px"></div>
<div class="cb" style="left:31px;top:725.5px"></div>
<div class="bk" style="left:54.05px;top:723.6px;width:32.51px"></div>
<div class="t" style="left:54.85px;top:723.9px">8<b>0</b><b>0</b></div>
<div class="bk" style="left:119.08px;top:723.6px;width:173.41px"></div>
<div class="t" style="left:119.88px;top:723.9px"><b>0</b><b>0</b><b>0</b><b>0</b><b>0</b><b>0</b><b>0</b><b>0</b><b>0</b><b>0</b><b>0</b><b>0</b>1<b>0</b>64</div>
<div class="bn" style="left:303.33px;top:723.6px;width:43.35px"></div>
<div class="t" style="left:304.13px;top:723.9px">3<b>0</b>A</div>
<div class="by" style="left:379.19px;top:723.6px;width:21.68px"></div>
<div class="t" style="left:379.99px;top:723.9px">51</div>
<div class="bn" style="left:455.06px;top:723.6px;width:86.70px"></div>
<div class="t" style="left:455.86px;top:723.9px">FIDCMT<b>0</b>1</div>
<div class="bn" style="left:552.60px;top:723.6px;width:10.84px"></div>
<div class="t" style="left:553.40px;top:723.9px">2</div>
<div class="bn" style="left:628.47px;top:723.6px;width:108.38px"></div>
<div class="t" style="left:629.27px;top:723.9px">SAPT3<b>0</b></div>
<div class="bn" style="left:747.69px;top:723.6px;width:21.68px"></div>
<div class="t" style="left:748.49px;top:723.9px">LS</div>
<div class="bn" style="left:823.55px;top:723.6px;width:108.38px"></div>
<div class="t" style="left:824.35px;top:723.9px">ID7CLNT8<b>0</b><b>0</b></div>
<div class="bn" style="left:942.77px;top:723.6px;width:108.38px"></div>
<div class="bn" style="left:1061.99px;top:723.6px;width:32.51px"></div>
<div class="bn" style="left:1137.85px;top:723.6px;width:10.84px"></div>
<div class="bn" style="left:1213.72px;top:723.6px;width:32.51px"></div>
<div class="bn" style="left:1289.59px;top:723.6px;width:10.84px"></div>
<div class="bn" style="left:1365.45px;top:723.6px;width:32.51px"></div>
<div class="bn" style="left:1441.32px;top:723.6px;width:758.66px"></div>
<div class="cb" style="left:31px;top:745.5px"></div>
<div class="bk" style="left:54.05px;top:743.6px;width:32.51px"></div>
<div class="t" style="left:54.85px;top:743.9px">8<b>0</b><b>0</b></div>
<div class="bk" style="left:119.08px;top:743.6px;width:173.41px"></div>
<div class="t" style="left:119.88px;top:743.9px"><b>0</b><b>0</b><b>0</b><b>0</b><b>0</b><b>0</b><b>0</b><b>0</b><b>0</b><b>0</b><b>0</b><b>0</b>1<b>0</b>65</div>
<div class="bn" style="left:303.33px;top:743.6px;width:43.35px"></div>
<div class="t" style="left:304.13px;top:743.9px">3<b>0</b>A</div>
<div class="by" style="left:379.19px;top:743.6px;width:21.68px"></div>
<div class="t" style="left:379.99px;top:743.9px">51</div>
<div class="bn" style="left:455.06px;top:743.6px;width:86.70px"></div>
<div class="t" style="left:455.86px;top:743.9px">FIDCMT<b>0</b>1</div>
<div class="bn" style="left:552.60px;top:743.6px;width:10.84px"></div>
<div class="t" style="left:553.40px;top:743.9px">2</div>
<div class="bn" style="left:628.47px;top:743.6px;width:108.38px"></div>
<div class="t" style="left:629.27px;top:743.9px">SAPT3<b>0</b></div>
<div class="bn" style="left:747.69px;top:743.6px;width:21.68px"></div>
<div class="t" style="left:748.49px;top:743.9px">LS</div>
<div class="bn" style="left:823.55px;top:743.6px;width:108.38px"></div>
<div class="t" style="left:824.35px;top:743.9px">ID7CLNT8<b>0</b><b>0</b></div>
<div class="bn" style="left:942.77px;top:743.6px;width:108.38px"></div>
<div class="bn" style="left:1061.99px;top:743.6px;width:32.51px"></div>
<div class="bn" style="left:1137.85px;top:743.6px;width:10.84px"></div>
<div class="bn" style="left:1213.72px;top:743.6px;width:32.51px"></div>
<div class="bn" style="left:1289.59px;top:743.6px;width:10.84px"></div>
<div class="bn" style="left:1365.45px;top:743.6px;width:32.51px"></div>
<div class="bn" style="left:1441.32px;top:743.6px;width:758.66px"></div>
<div class="cb" style="left:31px;top:765.5px"></div>
<div class="bk" style="left:54.05px;top:763.6px;width:32.51px"></div>
<div class="t" style="left:54.85px;top:763.9px">8<b>0</b><b>0</b></div>
<div class="bk" style="left:119.08px;top:763.6px;width:173.41px"></div>
<div class="t" style="left:119.88px;top:763.9px"><b>0</b><b>0</b><b>0</b><b>0</b><b>0</b><b>0</b><b>0</b><b>0</b><b>0</b><b>0</b><b>0</b><b>0</b>1<b>0</b>66</div>
<div class="bn" style="left:303.33px;top:763.6px;width:43.35px"></div>
<div class="t" style="left:304.13px;top:763.9px">3<b>0</b>A</div>
<div class="by" style="left:379.19px;top:763.6px;width:21.68px"></div>
<div class="t" style="left:379.99px;top:763.9px">51</div>
<div class="bn" style="left:455.06px;top:763.6px;width:86.70px"></div>
<div class="t" style="left:455.86px;top:763.9px">FIDCMT<b>0</b>1</div>
<div class="bn" style="left:552.60px;top:763.6px;width:10.84px"></div>
<div class="t" style="left:553.40px;top:763.9px">2</div>
<div class="bn" style="left:628.47px;top:763.6px;width:108.38px"></div>
<div class="t" style="left:629.27px;top:763.9px">SAPT3<b>0</b></div>
<div class="bn" style="left:747.69px;top:763.6px;width:21.68px"></div>
<div class="t" style="left:748.49px;top:763.9px">LS</div>
<div class="bn" style="left:823.55px;top:763.6px;width:108.38px"></div>
<div class="t" style="left:824.35px;top:763.9px">ID7CLNT8<b>0</b><b>0</b></div>
<div class="bn" style="left:942.77px;top:763.6px;width:108.38px"></div>
<div class="bn" style="left:1061.99px;top:763.6px;width:32.51px"></div>
<div class="bn" style="left:1137.85px;top:763.6px;width:10.84px"></div>
<div class="bn" style="left:1213.72px;top:763.6px;width:32.51px"></div>
<div class="bn" style="left:1289.59px;top:763.6px;width:10.84px"></div>
<div class="bn" style="left:1365.45px;top:763.6px;width:32.51px"></div>
<div class="bn" style="left:1441.32px;top:763.6px;width:758.66px"></div>
<div class="cb" style="left:31px;top:785.5px"></div>
<div class="bk" style="left:54.05px;top:783.6px;width:32.51px"></div>
<div class="t" style="left:54.85px;top:783.9px">8<b>0</b><b>0</b></div>
<div class="bk" style="left:119.08px;top:783.6px;width:173.41px"></div>
<div class="t" style="left:119.88px;top:783.9px"><b>0</b><b>0</b><b>0</b><b>0</b><b>0</b><b>0</b><b>0</b><b>0</b><b>0</b><b>0</b><b>0</b><b>0</b>2<b>0</b>61</div>
<div class="bn" style="left:303.33px;top:783.6px;width:43.35px"></div>
<div class="t" style="left:304.13px;top:783.9px">3<b>0</b>A</div>
<div class="by" style="left:379.19px;top:783.6px;width:21.68px"></div>
<div class="t" style="left:379.99px;top:783.9px">51</div>
<div class="bn" style="left:455.06px;top:783.6px;width:86.70px"></div>
<div class="t" style="left:455.86px;top:783.9px">FIDCMT<b>0</b>1</div>
<div class="bn" style="left:552.60px;top:783.6px;width:10.84px"></div>
<div class="t" style="left:553.40px;top:783.9px">2</div>
<div class="bn" style="left:628.47px;top:783.6px;width:108.38px"></div>
<div class="t" style="left:629.27px;top:783.9px">SAPT3<b>0</b></div>
<div class="bn" style="left:747.69px;top:783.6px;width:21.68px"></div>
<div class="t" style="left:748.49px;top:783.9px">LS</div>
<div class="bn" style="left:823.55px;top:783.6px;width:108.38px"></div>
<div class="t" style="left:824.35px;top:783.9px">ID7CLNT8<b>0</b><b>0</b></div>
<div class="bn" style="left:942.77px;top:783.6px;width:108.38px"></div>
<div class="bn" style="left:1061.99px;top:783.6px;width:32.51px"></div>
<div class="bn" style="left:1137.85px;top:783.6px;width:10.84px"></div>
<div class="bn" style="left:1213.72px;top:783.6px;width:32.51px"></div>
<div class="bn" style="left:1289.59px;top:783.6px;width:10.84px"></div>
<div class="bn" style="left:1365.45px;top:783.6px;width:32.51px"></div>
<div class="bn" style="left:1441.32px;top:783.6px;width:758.66px"></div>
<div class="cb" style="left:31px;top:805.5px"></div>
<div class="bk" style="left:54.05px;top:803.6px;width:32.51px"></div>
<div class="t" style="left:54.85px;top:803.9px">8<b>0</b><b>0</b></div>
<div class="bk" style="left:119.08px;top:803.6px;width:173.41px"></div>
<div class="t" style="left:119.88px;top:803.9px"><b>0</b><b>0</b><b>0</b><b>0</b><b>0</b><b>0</b><b>0</b><b>0</b><b>0</b><b>0</b><b>0</b><b>0</b>2<b>0</b>62</div>
<div class="bn" style="left:303.33px;top:803.6px;width:43.35px"></div>
<div class="t" style="left:304.13px;top:803.9px">3<b>0</b>A</div>
<div class="by" style="left:379.19px;top:803.6px;width:21.68px"></div>
<div class="t" style="left:379.99px;top:803.9px">29</div>
<div class="bn" style="left:455.06px;top:803.6px;width:86.70px"></div>
<div class="t" style="left:455.86px;top:803.9px">CODCMT<b>0</b>1</div>
<div class="bn" style="left:552.60px;top:803.6px;width:10.84px"></div>
<div class="t" style="left:553.40px;top:803.9px">1</div>
<div class="bn" style="left:628.47px;top:803.6px;width:108.38px"></div>
<div class="bn" style="left:747.69px;top:803.6px;width:21.68px"></div>
<div class="t" style="left:748.49px;top:803.9px">LS</div>
<div class="bn" style="left:823.55px;top:803.6px;width:108.38px"></div>
<div class="t" style="left:824.35px;top:803.9px">T9<b>0</b>MAND<b>0</b>9<b>0</b></div>
<div class="bn" style="left:942.77px;top:803.6px;width:108.38px"></div>
<div class="bn" style="left:1061.99px;top:803.6px;width:32.51px"></div>
<div class="bn" style="left:1137.85px;top:803.6px;width:10.84px"></div>
<div class="bn" style="left:1213.72px;top:803.6px;width:32.51px"></div>
<div class="bn" style="left:1289.59px;top:803.6px;width:10.84px"></div>
<div class="bn" style="left:1365.45px;top:803.6px;width:32.51px"></div>
<div class="bn" style="left:1441.32px;top:803.6px;width:758.66px"></div>
<div class="cb" style="left:31px;top:825.5px"></div>
<div class="bk" style="left:54.05px;top:823.6px;width:32.51px"></div>
<div class="t" style="left:54.85px;top:823.9px">8<b>0</b><b>0</b></div>
<div class="bk" style="left:119.08px;top:823.6px;width:173.41px"></div>
<div class="t" style="left:119.88px;top:823.9px"><b>0</b><b>0</b><b>0</b><b>0</b><b>0</b><b>0</b><b>0</b><b>0</b><b>0</b><b>0</b><b>0</b><b>0</b>2<b>0</b>63</div>
<div class="bn" style="left:303.33px;top:823.6px;width:43.35px"></div>
<div class="t" style="left:304.13px;top:823.9px">3<b>0</b>A</div>
<div class="by" style="left:379.19px;top:823.6px;width:21.68px"></div>
<div class="t" style="left:379.99px;top:823.9px">29</div>
<div class="bn" style="left:455.06px;top:823.6px;width:86.70px"></div>
<div class="t" style="left:455.86px;top:823.9px">CODCMT<b>0</b>1</div>
<div class="bn" style="left:552.60px;top:823.6px;width:10.84px"></div>
<div class="t" style="left:553.40px;top:823.9px">1</div>
<div class="bn" style="left:628.47px;top:823.6px;width:108.38px"></div>
<div class="bn" style="left:747.69px;top:823.6px;width:21.68px"></div>
<div class="t" style="left:748.49px;top:823.9px">LS</div>
<div class="bn" style="left:823.55px;top:823.6px;width:108.38px"></div>
<div class="t" style="left:824.35px;top:823.9px">T9<b>0</b>MAND<b>0</b>9<b>0</b></div>
<div class="bn" style="left:942.77px;top:823.6px;width:108.38px"></div>
<div class="bn" style="left:1061.99px;top:823.6px;width:32.51px"></div>
<div class="bn" style="left:1137.85px;top:823.6px;width:10.84px"></div>
<div class="bn" style="left:1213.72px;top:823.6px;width:32.51px"></div>
<div class="bn" style="left:1289.59px;top:823.6px;width:10.84px"></div>
<div class="bn" style="left:1365.45px;top:823.6px;width:32.51px"></div>
<div class="bn" style="left:1441.32px;top:823.6px;width:758.66px"></div>
<div class="cb" style="left:31px;top:845.5px"></div>
<div class="bk" style="left:54.05px;top:843.6px;width:32.51px"></div>
<div class="t" style="left:54.85px;top:843.9px">8<b>0</b><b>0</b></div>
<div class="bk" style="left:119.08px;top:843.6px;width:173.41px"></div>
<div class="t" style="left:119.88px;top:843.9px"><b>0</b><b>0</b><b>0</b><b>0</b><b>0</b><b>0</b><b>0</b><b>0</b><b>0</b><b>0</b><b>0</b><b>0</b>2<b>0</b>64</div>
<div class="bn" style="left:303.33px;top:843.6px;width:43.35px"></div>
<div class="t" style="left:304.13px;top:843.9px">3<b>0</b>A</div>
<div class="by" style="left:379.19px;top:843.6px;width:21.68px"></div>
<div class="t" style="left:379.99px;top:843.9px">51</div>
<div class="bn" style="left:455.06px;top:843.6px;width:86.70px"></div>
<div class="t" style="left:455.86px;top:843.9px">FIDCMT<b>0</b>1</div>
<div class="bn" style="left:552.60px;top:843.6px;width:10.84px"></div>
<div class="t" style="left:553.40px;top:843.9px">2</div>
<div class="bn" style="left:628.47px;top:843.6px;width:108.38px"></div>
<div class="t" style="left:629.27px;top:843.9px">SAPT3<b>0</b></div>
<div class="bn" style="left:747.69px;top:843.6px;width:21.68px"></div>
<div class="t" style="left:748.49px;top:843.9px">LS</div>
<div class="bn" style="left:823.55px;top:843.6px;width:108.38px"></div>
<div class="t" style="left:824.35px;top:843.9px">ID7CLNT8<b>0</b><b>0</b></div>
<div class="bn" style="left:942.77px;top:843.6px;width:108.38px"></div>
<div class="bn" style="left:1061.99px;top:843.6px;width:32.51px"></div>
<div class="bn" style="left:1137.85px;top:843.6px;width:10.84px"></div>
<div class="bn" style="left:1213.72px;top:843.6px;width:32.51px"></div>
<div class="bn" style="left:1289.59px;top:843.6px;width:10.84px"></div>
<div class="bn" style="left:1365.45px;top:843.6px;width:32.51px"></div>
<div class="bn" style="left:1441.32px;top:843.6px;width:758.66px"></div>
<div class="cb" style="left:31px;top:865.5px"></div>
<div class="bk" style="left:54.05px;top:863.6px;width:32.51px"></div>
<div class="t" style="left:54.85px;top:863.9px">8<b>0</b><b>0</b></div>
<div class="bk" style="left:119.08px;top:863.6px;width:173.41px"></div>
<div class="t" style="left:119.88px;top:863.9px"><b>0</b><b>0</b><b>0</b><b>0</b><b>0</b><b>0</b><b>0</b><b>0</b><b>0</b><b>0</b><b>0</b><b>0</b>2<b>0</b>65</div>
<div class="bn" style="left:303.33px;top:863.6px;width:43.35px"></div>
<div class="t" style="left:304.13px;top:863.9px">3<b>0</b>A</div>
<div class="by" style="left:379.19px;top:863.6px;width:21.68px"></div>
<div class="t" style="left:379.99px;top:863.9px">51</div>
<div class="bn" style="left:455.06px;top:863.6px;width:86.70px"></div>
<div class="t" style="left:455.86px;top:863.9px">FIDCMT<b>0</b>1</div>
<div class="bn" style="left:552.60px;top:863.6px;width:10.84px"></div>
<div class="t" style="left:553.40px;top:863.9px">2</div>
<div class="bn" style="left:628.47px;top:863.6px;width:108.38px"></div>
<div class="t" style="left:629.27px;top:863.9px">SAPT3<b>0</b></div>
<div class="bn" style="left:747.69px;top:863.6px;width:21.68px"></div>
<div class="t" style="left:748.49px;top:863.9px">LS</div>
<div class="bn" style="left:823.55px;top:863.6px;width:108.38px"></div>
<div class="t" style="left:824.35px;top:863.9px">ID7CLNT8<b>0</b><b>0</b></div>
<div class="bn" style="left:942.77px;top:863.6px;width:108.38px"></div>
<div class="bn" style="left:1061.99px;top:863.6px;width:32.51px"></div>
<div class="bn" style="left:1137.85px;top:863.6px;width:10.84px"></div>
<div class="bn" style="left:1213.72px;top:863.6px;width:32.51px"></div>
<div class="bn" style="left:1289.59px;top:863.6px;width:10.84px"></div>
<div class="bn" style="left:1365.45px;top:863.6px;width:32.51px"></div>
<div class="bn" style="left:1441.32px;top:863.6px;width:758.66px"></div>
<div class="cb" style="left:31px;top:885.6px"></div>
<div class="bk" style="left:54.05px;top:883.7px;width:32.51px"></div>
<div class="t" style="left:54.85px;top:884.0px">8<b>0</b><b>0</b></div>
<div class="bk" style="left:119.08px;top:883.7px;width:173.41px"></div>
<div class="t" style="left:119.88px;top:884.0px"><b>0</b><b>0</b><b>0</b><b>0</b><b>0</b><b>0</b><b>0</b><b>0</b><b>0</b><b>0</b><b>0</b><b>0</b>2<b>0</b>66</div>
<div class="bn" style="left:303.33px;top:883.7px;width:43.35px"></div>
<div class="t" style="left:304.13px;top:884.0px">3<b>0</b>A</div>
<div class="by" style="left:379.19px;top:883.7px;width:21.68px"></div>
<div class="t" style="left:379.99px;top:884.0px">51</div>
<div class="bn" style="left:455.06px;top:883.7px;width:86.70px"></div>
<div class="t" style="left:455.86px;top:884.0px">FIDCMT<b>0</b>1</div>
<div class="bn" style="left:552.60px;top:883.7px;width:10.84px"></div>
<div class="t" style="left:553.40px;top:884.0px">2</div>
<div class="bn" style="left:628.47px;top:883.7px;width:108.38px"></div>
<div class="t" style="left:629.27px;top:884.0px">SAPT3<b>0</b></div>
<div class="bn" style="left:747.69px;top:883.7px;width:21.68px"></div>
<div class="t" style="left:748.49px;top:884.0px">LS</div>
<div class="bn" style="left:823.55px;top:883.7px;width:108.38px"></div>
<div class="t" style="left:824.35px;top:884.0px">ID7CLNT8<b>0</b><b>0</b></div>
<div class="bn" style="left:942.77px;top:883.7px;width:108.38px"></div>
<div class="bn" style="left:1061.99px;top:883.7px;width:32.51px"></div>
<div class="bn" style="left:1137.85px;top:883.7px;width:10.84px"></div>
<div class="bn" style="left:1213.72px;top:883.7px;width:32.51px"></div>
<div class="bn" style="left:1289.59px;top:883.7px;width:10.84px"></div>
<div class="bn" style="left:1365.45px;top:883.7px;width:32.51px"></div>
<div class="bn" style="left:1441.32px;top:883.7px;width:758.66px"></div>
<div class="cb" style="left:31px;top:905.6px"></div>
<div class="bk" style="left:54.05px;top:903.7px;width:32.51px"></div>
<div class="t" style="left:54.85px;top:904.0px">8<b>0</b><b>0</b></div>
<div class="bk" style="left:119.08px;top:903.7px;width:173.41px"></div>
<div class="t" style="left:119.88px;top:904.0px"><b>0</b><b>0</b><b>0</b><b>0</b><b>0</b><b>0</b><b>0</b><b>0</b><b>0</b><b>0</b><b>0</b><b>0</b>2<b>0</b>67</div>
<div class="bn" style="left:303.33px;top:903.7px;width:43.35px"></div>
<div class="t" style="left:304.13px;top:904.0px">3<b>0</b>A</div>
<div class="by" style="left:379.19px;top:903.7px;width:21.68px"></div>
<div class="t" style="left:379.99px;top:904.0px">51</div>
<div class="bn" style="left:455.06px;top:903.7px;width:86.70px"></div>
<div class="t" style="left:455.86px;top:904.0px">FIDCMT<b>0</b>1</div>
<div class="bn" style="left:552.60px;top:903.7px;width:10.84px"></div>
<div class="t" style="left:553.40px;top:904.0px">2</div>
<div class="bn" style="left:628.47px;top:903.7px;width:108.38px"></div>
<div class="t" style="left:629.27px;top:904.0px">SAPT3<b>0</b></div>
<div class="bn" style="left:747.69px;top:903.7px;width:21.68px"></div>
<div class="t" style="left:748.49px;top:904.0px">LS</div>
<div class="bn" style="left:823.55px;top:903.7px;width:108.38px"></div>
<div class="t" style="left:824.35px;top:904.0px">ID7CLNT8<b>0</b><b>0</b></div>
<div class="bn" style="left:942.77px;top:903.7px;width:108.38px"></div>
<div class="bn" style="left:1061.99px;top:903.7px;width:32.51px"></div>
<div class="bn" style="left:1137.85px;top:903.7px;width:10.84px"></div>
<div class="bn" style="left:1213.72px;top:903.7px;width:32.51px"></div>
<div class="bn" style="left:1289.59px;top:903.7px;width:10.84px"></div>
<div class="bn" style="left:1365.45px;top:903.7px;width:32.51px"></div>
<div class="bn" style="left:1441.32px;top:903.7px;width:758.66px"></div>
<div class="cb" style="left:31px;top:925.6px"></div>
<div class="bk" style="left:54.05px;top:923.7px;width:32.51px"></div>
<div class="t" style="left:54.85px;top:924.0px">8<b>0</b><b>0</b></div>
<div class="bk" style="left:119.08px;top:923.7px;width:173.41px"></div>
<div class="t" style="left:119.88px;top:924.0px"><b>0</b><b>0</b><b>0</b><b>0</b><b>0</b><b>0</b><b>0</b><b>0</b><b>0</b><b>0</b><b>0</b><b>0</b>3<b>0</b>57</div>
<div class="bn" style="left:303.33px;top:923.7px;width:43.35px"></div>
<div class="t" style="left:304.13px;top:924.0px">3<b>0</b>A</div>
<div class="by" style="left:379.19px;top:923.7px;width:21.68px"></div>
<div class="t" style="left:379.99px;top:924.0px">51</div>
<div class="bn" style="left:455.06px;top:923.7px;width:86.70px"></div>
<div class="t" style="left:455.86px;top:924.0px">FIDCMT<b>0</b>1</div>
<div class="bn" style="left:552.60px;top:923.7px;width:10.84px"></div>
<div class="t" style="left:553.40px;top:924.0px">2</div>
<div class="bn" style="left:628.47px;top:923.7px;width:108.38px"></div>
<div class="t" style="left:629.27px;top:924.0px">SAPT3<b>0</b></div>
<div class="bn" style="left:747.69px;top:923.7px;width:21.68px"></div>
<div class="t" style="left:748.49px;top:924.0px">LS</div>
<div class="bn" style="left:823.55px;top:923.7px;width:108.38px"></div>
<div class="t" style="left:824.35px;top:924.0px">ID7CLNT8<b>0</b><b>0</b></div>
<div class="bn" style="left:942.77px;top:923.7px;width:108.38px"></div>
<div class="bn" style="left:1061.99px;top:923.7px;width:32.51px"></div>
<div class="bn" style="left:1137.85px;top:923.7px;width:10.84px"></div>
<div class="bn" style="left:1213.72px;top:923.7px;width:32.51px"></div>
<div class="bn" style="left:1289.59px;top:923.7px;width:10.84px"></div>
<div class="bn" style="left:1365.45px;top:923.7px;width:32.51px"></div>
<div class="bn" style="left:1441.32px;top:923.7px;width:758.66px"></div>
<div class="cb" style="left:31px;top:945.6px"></div>
<div class="bk" style="left:54.05px;top:943.7px;width:32.51px"></div>
<div class="t" style="left:54.85px;top:944.0px">8<b>0</b><b>0</b></div>
<div class="bk" style="left:119.08px;top:943.7px;width:173.41px"></div>
<div class="t" style="left:119.88px;top:944.0px"><b>0</b><b>0</b><b>0</b><b>0</b><b>0</b><b>0</b><b>0</b><b>0</b><b>0</b><b>0</b><b>0</b><b>0</b>3<b>0</b>58</div>
<div class="bn" style="left:303.33px;top:943.7px;width:43.35px"></div>
<div class="t" style="left:304.13px;top:944.0px">3<b>0</b>A</div>
<div class="by" style="left:379.19px;top:943.7px;width:21.68px"></div>
<div class="t" style="left:379.99px;top:944.0px">51</div>
<div class="bn" style="left:455.06px;top:943.7px;width:86.70px"></div>
<div class="t" style="left:455.86px;top:944.0px">FIDCMT<b>0</b>1</div>
<div class="bn" style="left:552.60px;top:943.7px;width:10.84px"></div>
<div class="t" style="left:553.40px;top:944.0px">2</div>
<div class="bn" style="left:628.47px;top:943.7px;width:108.38px"></div>
<div class="t" style="left:629.27px;top:944.0px">SAPT3<b>0</b></div>
<div class="bn" style="left:747.69px;top:943.7px;width:21.68px"></div>
<div class="t" style="left:748.49px;top:944.0px">LS</div>
<div class="bn" style="left:823.55px;top:943.7px;width:108.38px"></div>
<div class="t" style="left:824.35px;top:944.0px">ID7CLNT8<b>0</b><b>0</b></div>
<div class="bn" style="left:942.77px;top:943.7px;width:108.38px"></div>
<div class="bn" style="left:1061.99px;top:943.7px;width:32.51px"></div>
<div class="bn" style="left:1137.85px;top:943.7px;width:10.84px"></div>
<div class="bn" style="left:1213.72px;top:943.7px;width:32.51px"></div>
<div class="bn" style="left:1289.59px;top:943.7px;width:10.84px"></div>
<div class="bn" style="left:1365.45px;top:943.7px;width:32.51px"></div>
<div class="bn" style="left:1441.32px;top:943.7px;width:758.66px"></div>
<div class="cb" style="left:31px;top:965.6px"></div>
<div class="bk" style="left:54.05px;top:963.7px;width:32.51px"></div>
<div class="t" style="left:54.85px;top:964.0px">8<b>0</b><b>0</b></div>
<div class="bk" style="left:119.08px;top:963.7px;width:173.41px"></div>
<div class="t" style="left:119.88px;top:964.0px"><b>0</b><b>0</b><b>0</b><b>0</b><b>0</b><b>0</b><b>0</b><b>0</b><b>0</b><b>0</b><b>0</b><b>0</b>3<b>0</b>59</div>
<div class="bn" style="left:303.33px;top:963.7px;width:43.35px"></div>
<div class="t" style="left:304.13px;top:964.0px">3<b>0</b>A</div>
<div class="by" style="left:379.19px;top:963.7px;width:21.68px"></div>
<div class="t" style="left:379.99px;top:964.0px">51</div>
<div class="bn" style="left:455.06px;top:963.7px;width:86.70px"></div>
<div class="t" style="left:455.86px;top:964.0px">FIDCMT<b>0</b>1</div>
<div class="bn" style="left:552.60px;top:963.7px;width:10.84px"></div>
<div class="t" style="left:553.40px;top:964.0px">2</div>
<div class="bn" style="left:628.47px;top:963.7px;width:108.38px"></div>
<div class="t" style="left:629.27px;top:964.0px">SAPT3<b>0</b></div>
<div class="bn" style="left:747.69px;top:963.7px;width:21.68px"></div>
<div class="t" style="left:748.49px;top:964.0px">LS</div>
<div class="bn" style="left:823.55px;top:963.7px;width:108.38px"></div>
<div class="t" style="left:824.35px;top:964.0px">ID7CLNT8<b>0</b><b>0</b></div>
<div class="bn" style="left:942.77px;top:963.7px;width:108.38px"></div>
<div class="bn" style="left:1061.99px;top:963.7px;width:32.51px"></div>
<div class="bn" style="left:1137.85px;top:963.7px;width:10.84px"></div>
<div class="bn" style="left:1213.72px;top:963.7px;width:32.51px"></div>
<div class="bn" style="left:1289.59px;top:963.7px;width:10.84px"></div>
<div class="bn" style="left:1365.45px;top:963.7px;width:32.51px"></div>
<div class="bn" style="left:1441.32px;top:963.7px;width:758.66px"></div>
<div class="cb" style="left:31px;top:985.6px"></div>
<div class="bk" style="left:54.05px;top:983.7px;width:32.51px"></div>
<div class="t" style="left:54.85px;top:984.0px">8<b>0</b><b>0</b></div>
<div class="bk" style="left:119.08px;top:983.7px;width:173.41px"></div>
<div class="t" style="left:119.88px;top:984.0px"><b>0</b><b>0</b><b>0</b><b>0</b><b>0</b><b>0</b><b>0</b><b>0</b><b>0</b><b>0</b><b>0</b><b>0</b>3<b>0</b>6<b>0</b></div>
<div class="bn" style="left:303.33px;top:983.7px;width:43.35px"></div>
<div class="t" style="left:304.13px;top:984.0px">3<b>0</b>A</div>
<div class="by" style="left:379.19px;top:983.7px;width:21.68px"></div>
<div class="t" style="left:379.99px;top:984.0px">51</div>
<div class="bn" style="left:455.06px;top:983.7px;width:86.70px"></div>
<div class="t" style="left:455.86px;top:984.0px">FIDCMT<b>0</b>1</div>
<div class="bn" style="left:552.60px;top:983.7px;width:10.84px"></div>
<div class="t" style="left:553.40px;top:984.0px">2</div>
<div class="bn" style="left:628.47px;top:983.7px;width:108.38px"></div>
<div class="t" style="left:629.27px;top:984.0px">SAPT3<b>0</b></div>
<div class="bn" style="left:747.69px;top:983.7px;width:21.68px"></div>
<div class="t" style="left:748.49px;top:984.0px">LS</div>
<div class="bn" style="left:823.55px;top:983.7px;width:108.38px"></div>
<div class="t" style="left:824.35px;top:984.0px">ID7CLNT8<b>0</b><b>0</b></div>
<div class="bn" style="left:942.77px;top:983.7px;width:108.38px"></div>
<div class="bn" style="left:1061.99px;top:983.7px;width:32.51px"></div>
<div class="bn" style="left:1137.85px;top:983.7px;width:10.84px"></div>
<div class="bn" style="left:1213.72px;top:983.7px;width:32.51px"></div>
<div class="bn" style="left:1289.59px;top:983.7px;width:10.84px"></div>
<div class="bn" style="left:1365.45px;top:983.7px;width:32.51px"></div>
<div class="bn" style="left:1441.32px;top:983.7px;width:758.66px"></div>
<div class="cb" style="left:31px;top:1005.6px"></div>
<div class="bk" style="left:54.05px;top:1003.7px;width:32.51px"></div>
<div class="t" style="left:54.85px;top:1004.0px">8<b>0</b><b>0</b></div>
<div class="bk" style="left:119.08px;top:1003.7px;width:173.41px"></div>
<div class="t" style="left:119.88px;top:1004.0px"><b>0</b><b>0</b><b>0</b><b>0</b><b>0</b><b>0</b><b>0</b><b>0</b><b>0</b><b>0</b><b>0</b><b>0</b>3<b>0</b>61</div>
<div class="bn" style="left:303.33px;top:1003.7px;width:43.35px"></div>
<div class="t" style="left:304.13px;top:1004.0px">3<b>0</b>A</div>
<div class="by" style="left:379.19px;top:1003.7px;width:21.68px"></div>
<div class="t" style="left:379.99px;top:1004.0px">51</div>
<div class="bn" style="left:455.06px;top:1003.7px;width:86.70px"></div>
<div class="t" style="left:455.86px;top:1004.0px">FIDCMT<b>0</b>1</div>
<div class="bn" style="left:552.60px;top:1003.7px;width:10.84px"></div>
<div class="t" style="left:553.40px;top:1004.0px">2</div>
<div class="bn" style="left:628.47px;top:1003.7px;width:108.38px"></div>
<div class="t" style="left:629.27px;top:1004.0px">SAPT3<b>0</b></div>
<div class="bn" style="left:747.69px;top:1003.7px;width:21.68px"></div>
<div class="t" style="left:748.49px;top:1004.0px">LS</div>
<div class="bn" style="left:823.55px;top:1003.7px;width:108.38px"></div>
<div class="t" style="left:824.35px;top:1004.0px">ID7CLNT8<b>0</b><b>0</b></div>
<div class="bn" style="left:942.77px;top:1003.7px;width:108.38px"></div>
<div class="bn" style="left:1061.99px;top:1003.7px;width:32.51px"></div>
<div class="bn" style="left:1137.85px;top:1003.7px;width:10.84px"></div>
<div class="bn" style="left:1213.72px;top:1003.7px;width:32.51px"></div>
<div class="bn" style="left:1289.59px;top:1003.7px;width:10.84px"></div>
<div class="bn" style="left:1365.45px;top:1003.7px;width:32.51px"></div>
<div class="bn" style="left:1441.32px;top:1003.7px;width:758.66px"></div>
<svg width="2256" height="1007" style="position:absolute;left:0;top:0"><g fill="#363636">
<rect x="26.7" y="231.65" width="2171.6" height="1.2"/>
<rect x="26.7" y="271.9" width="2171.6" height="1.2"/>
<rect x="26.71" y="231.65" width="1.2" height="780"/>
<rect x="48.20" y="231.65" width="1.2" height="780"/>
<rect x="113.40" y="231.65" width="1.2" height="780"/>
<rect x="296.71" y="231.65" width="1.2" height="780"/>
<rect x="373.20" y="231.65" width="1.2" height="780"/>
<rect x="448.27" y="231.65" width="1.2" height="780"/>
<rect x="546.70" y="231.65" width="1.2" height="780"/>
<rect x="621.60" y="231.65" width="1.2" height="780"/>
<rect x="741.63" y="231.65" width="1.2" height="780"/>
<rect x="816.70" y="231.65" width="1.2" height="780"/>
<rect x="936.50" y="231.65" width="1.2" height="780"/>
<rect x="1054.80" y="231.65" width="1.2" height="780"/>
<rect x="1131.60" y="231.65" width="1.2" height="780"/>
<rect x="1206.70" y="231.65" width="1.2" height="780"/>
<rect x="1283.00" y="231.65" width="1.2" height="780"/>
<rect x="1358.20" y="231.65" width="1.2" height="780"/>
<rect x="1434.90" y="231.65" width="1.2" height="780"/>
</g></svg>
<!-- scrollbar -->
<div style="left:2220px;top:174px;width:20px;height:833px;background:#f6f8fb"></div>
<div style="left:2220px;top:175px;width:19px;height:19.5px;background:#f1f5fa"></div>
<div style="left:2220px;top:195.5px;width:19px;height:20px;background:#f1f5fa"></div>
<svg width="2256" height="1007" style="position:absolute;left:0;top:0">
<path d="M2224.8 187.2 L2230 182 L2235.2 187.2Z" fill="#4a5866"/>
<path d="M2224.8 202.8 L2230 208 L2235.2 202.8Z" fill="#4a5866"/>
<rect x="2221.8" y="218.3" width="16.6" height="307" fill="#e3ebf3" stroke="#b7c3cf" stroke-width="1.2"/>
<rect x="2236" y="219" width="1.8" height="306" fill="#d3dde8"/>
<g fill="#8a96a2"><rect x="2227" y="370" width="1" height="1"/><rect x="2227" y="372.5" width="1" height="1"/><rect x="2227" y="375" width="1" height="1"/><rect x="2231.5" y="370" width="1" height="1"/><rect x="2231.5" y="372.5" width="1" height="1"/><rect x="2231.5" y="375" width="1" height="1"/></g>
</svg>

</body></html>
